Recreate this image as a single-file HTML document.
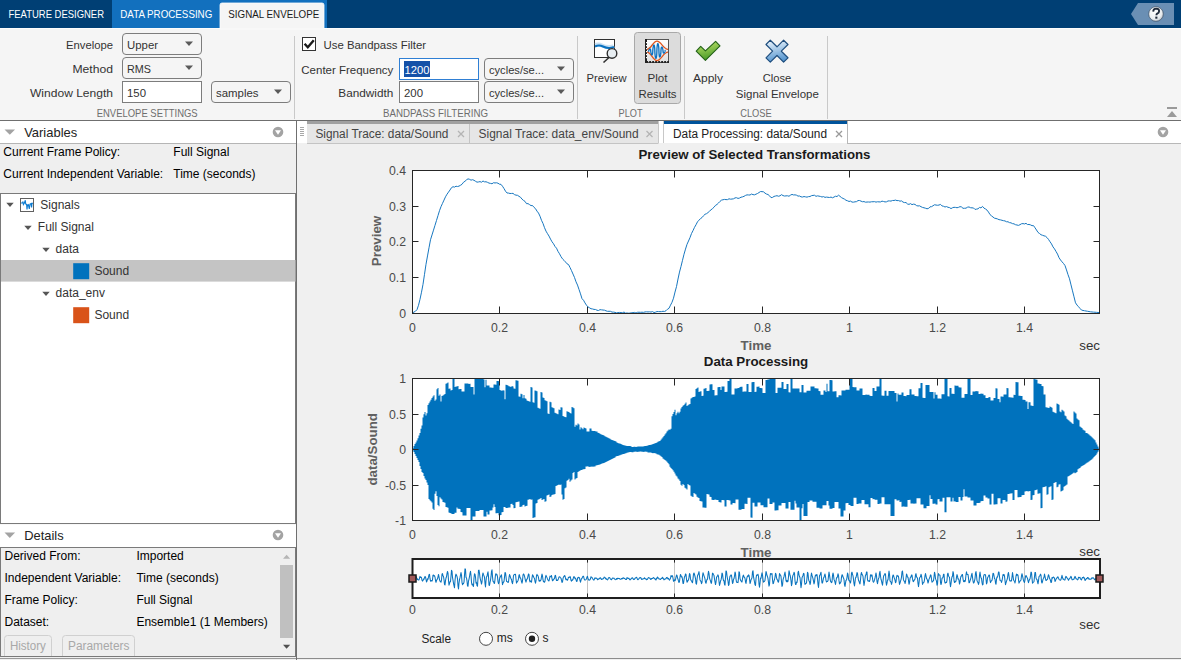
<!DOCTYPE html>
<html><head><meta charset="utf-8"><title>Signal Envelope</title>
<style>
html,body{margin:0;padding:0;width:1181px;height:660px;overflow:hidden;background:#f0f0f0;}
svg{display:block;font-family:"Liberation Sans", sans-serif;}
</style></head>
<body>
<svg width="1181" height="660" viewBox="0 0 1181 660">
<rect x="0" y="0" width="1181" height="28" fill="#003f74"/>
<rect x="112" y="0" width="215" height="28" fill="#1270be"/>
<rect x="0" y="28" width="1181" height="1" fill="#fcfcfc"/>
<rect x="0" y="29" width="1181" height="91" fill="#f5f5f5"/>
<path d="M220 29 V5 Q220 3 222 3 H322 Q324 3 324 5 V29 Z" fill="#f5f5f5" stroke="#fdfdfd" stroke-width="0.8"/>
<text x="8.5" y="18" font-size="11" fill="#ffffff" textLength="95.5" lengthAdjust="spacingAndGlyphs">FEATURE DESIGNER</text>
<text x="120.3" y="18" font-size="11" fill="#ffffff" textLength="92" lengthAdjust="spacingAndGlyphs">DATA PROCESSING</text>
<text x="228.3" y="18" font-size="11" fill="#1a1a1a" textLength="91" lengthAdjust="spacingAndGlyphs">SIGNAL ENVELOPE</text>
<path d="M1131 14 L1138 3 H1174 V25 H1138 Z" fill="#6a8fb4"/>
<defs><radialGradient id="hg" cx="0.4" cy="0.35" r="0.7"><stop offset="0" stop-color="#ffffff"/><stop offset="0.7" stop-color="#e8ecef"/><stop offset="1" stop-color="#b8c0c8"/></radialGradient></defs>
<circle cx="1156" cy="14" r="7.3" fill="url(#hg)" stroke="#2e3e50" stroke-width="0.6"/>
<path d="M1153.2 11.6 Q1153.3 8.6 1156.2 8.6 Q1159.2 8.7 1159.1 11.2 Q1159 12.8 1157.2 13.6 Q1156.4 14.1 1156.4 15.3" fill="none" stroke="#1f2a3a" stroke-width="1.9"/>
<rect x="1155.3" y="16.6" width="2.1" height="2.1" fill="#1f2a3a"/>
<text x="113" y="49" font-size="11.5" fill="#333333" text-anchor="end" textLength="47" lengthAdjust="spacingAndGlyphs">Envelope</text>
<text x="113" y="73" font-size="11.5" fill="#333333" text-anchor="end" textLength="40.5" lengthAdjust="spacingAndGlyphs">Method</text>
<text x="113" y="96.5" font-size="11.5" fill="#333333" text-anchor="end" textLength="83" lengthAdjust="spacingAndGlyphs">Window Length</text>
<rect x="122.5" y="33.5" width="79" height="21" fill="#f5f5f5" stroke="#7d7d7d" stroke-width="1" rx="3.5"/>
<text x="127" y="49" font-size="11.5" fill="#333333" textLength="31" lengthAdjust="spacingAndGlyphs">Upper</text>
<path d="M185 41.5 h8 l-4 4.5 z" fill="#5a5a5a"/>
<rect x="122.5" y="57.5" width="79" height="21" fill="#f5f5f5" stroke="#7d7d7d" stroke-width="1" rx="3.5"/>
<text x="127" y="73" font-size="11.5" fill="#333333" textLength="24" lengthAdjust="spacingAndGlyphs">RMS</text>
<path d="M185 65.5 h8 l-4 4.5 z" fill="#5a5a5a"/>
<rect x="122.5" y="81.5" width="79" height="21" fill="#ffffff" stroke="#7d7d7d" stroke-width="1"/>
<text x="127" y="97" font-size="11.5" fill="#333333" textLength="19" lengthAdjust="spacingAndGlyphs">150</text>
<rect x="211.5" y="81.5" width="79" height="21" fill="#f5f5f5" stroke="#7d7d7d" stroke-width="1" rx="3.5"/>
<text x="216" y="97" font-size="11.5" fill="#333333" textLength="42.5" lengthAdjust="spacingAndGlyphs">samples</text>
<path d="M274 89.5 h8 l-4 4.5 z" fill="#5a5a5a"/>
<text x="96.7" y="116.7" font-size="10.5" fill="#6e6e6e" textLength="101" lengthAdjust="spacingAndGlyphs">ENVELOPE SETTINGS</text>
<line x1="294.5" y1="36" x2="294.5" y2="119" stroke="#c9c9c9" stroke-width="1"/>
<rect x="302.5" y="37.5" width="13" height="13" fill="#ffffff" stroke="#333333" stroke-width="1"/>
<path d="M304.6 43.8 L307.8 47.3 L313.8 40.2" fill="none" stroke="#1a1a1a" stroke-width="2.4"/>
<text x="323.5" y="48.5" font-size="11.5" fill="#333333" textLength="102.5" lengthAdjust="spacingAndGlyphs">Use Bandpass Filter</text>
<text x="393.3" y="74.3" font-size="11.5" fill="#333333" text-anchor="end" textLength="92" lengthAdjust="spacingAndGlyphs">Center Frequency</text>
<text x="393.3" y="96.7" font-size="11.5" fill="#333333" text-anchor="end" textLength="55" lengthAdjust="spacingAndGlyphs">Bandwidth</text>
<rect x="399.5" y="58.5" width="79" height="21" fill="#ffffff" stroke="#2f7fd4" stroke-width="1"/>
<rect x="404" y="61" width="26" height="16" fill="#1551a8"/>
<text x="404.5" y="74" font-size="11.5" fill="#ffffff" textLength="25" lengthAdjust="spacingAndGlyphs">1200</text>
<rect x="399.5" y="81.5" width="79" height="21" fill="#ffffff" stroke="#7d7d7d" stroke-width="1"/>
<text x="404" y="97" font-size="11.5" fill="#333333" textLength="19" lengthAdjust="spacingAndGlyphs">200</text>
<rect x="484.5" y="58.5" width="89" height="21" fill="#f5f5f5" stroke="#7d7d7d" stroke-width="1" rx="3.5"/>
<text x="489" y="74" font-size="11.5" fill="#333333" textLength="55" lengthAdjust="spacingAndGlyphs">cycles/se...</text>
<path d="M557 66.5 h8 l-4 4.5 z" fill="#5a5a5a"/>
<rect x="484.5" y="81.5" width="89" height="21" fill="#f5f5f5" stroke="#7d7d7d" stroke-width="1" rx="3.5"/>
<text x="489" y="97" font-size="11.5" fill="#333333" textLength="55" lengthAdjust="spacingAndGlyphs">cycles/se...</text>
<path d="M557 89.5 h8 l-4 4.5 z" fill="#5a5a5a"/>
<text x="383" y="116.7" font-size="10.5" fill="#6e6e6e" textLength="105" lengthAdjust="spacingAndGlyphs">BANDPASS FILTERING</text>
<line x1="577.5" y1="36" x2="577.5" y2="119" stroke="#c9c9c9" stroke-width="1"/>
<rect x="594.5" y="39.5" width="20" height="18" fill="#ffffff" stroke="#303030" stroke-width="1"/>
<path d="M595 45 Q599 44 602 45.5 T609 47 T614 46" fill="none" stroke="#a8cdeb" stroke-width="4" opacity="0.6"/>
<path d="M595 46.5 Q599 44.5 603 46.5 T610 48 T614 47" fill="none" stroke="#0a72c0" stroke-width="2"/>
<line x1="609" y1="57.5" x2="603.5" y2="62.5" stroke="#303030" stroke-width="1.6"/>
<circle cx="612" cy="53.4" r="4.8" fill="#e8eef2" stroke="#303030" stroke-width="1.4"/>
<text x="606.6" y="82" font-size="11.5" fill="#333333" text-anchor="middle" textLength="40" lengthAdjust="spacingAndGlyphs">Preview</text>
<rect x="634.5" y="32.5" width="46" height="71" fill="#dcdcdc" stroke="#a9a9a9" stroke-width="1" rx="3"/>
<defs><linearGradient id="pg" x1="0" y1="0" x2="0" y2="1"><stop offset="0" stop-color="#ffffff"/><stop offset="1" stop-color="#e0e0e0"/></linearGradient></defs>
<rect x="645.5" y="39.5" width="23" height="23" fill="url(#pg)" stroke="#555" stroke-width="1"/>
<rect x="645" y="39" width="2" height="24" fill="#222"/><rect x="645" y="61" width="24" height="2" fill="#222"/>
<rect x="646" y="42" width="1" height="1.2" fill="#fff"/><rect x="646" y="45" width="1" height="1.2" fill="#fff"/><rect x="646" y="48" width="1" height="1.2" fill="#fff"/><rect x="646" y="51" width="1" height="1.2" fill="#fff"/><rect x="646" y="54" width="1" height="1.2" fill="#fff"/><rect x="646" y="57" width="1" height="1.2" fill="#fff"/><rect x="648" y="61.2" width="1.2" height="1" fill="#fff"/><rect x="651" y="61.2" width="1.2" height="1" fill="#fff"/><rect x="654" y="61.2" width="1.2" height="1" fill="#fff"/><rect x="657" y="61.2" width="1.2" height="1" fill="#fff"/><rect x="660" y="61.2" width="1.2" height="1" fill="#fff"/><rect x="663" y="61.2" width="1.2" height="1" fill="#fff"/><rect x="666" y="61.2" width="1.2" height="1" fill="#fff"/>
<path d="M647 49.3 C651 49.3 653 41.2 657 41.2 C661 41.2 663.5 49.3 668 49.3" fill="none" stroke="#e0541c" stroke-width="1.3"/>
<path d="M647 52.2 C651 52.2 653 60.6 657 60.6 C661 60.6 663.5 52.2 668 52.2" fill="none" stroke="#e0541c" stroke-width="1.3"/>
<polyline points="648.30,51.81 648.41,51.72 648.51,51.59 648.62,51.37 648.73,50.72 648.84,50.39 648.94,50.14 649.05,49.93 649.16,49.73 649.27,49.56 649.38,49.40 649.48,49.25 649.59,49.13 649.70,49.04 649.80,48.97 649.91,48.93 650.02,48.92 650.13,48.96 650.23,49.04 650.34,49.18 650.45,49.39 650.56,49.69 650.66,50.17 650.77,51.56 650.88,52.27 650.99,52.77 651.09,53.20 651.20,53.58 651.31,53.91 651.42,54.20 651.52,54.45 651.63,54.65 651.74,54.79 651.85,54.89 651.95,54.92 652.06,54.89 652.17,54.78 652.28,54.59 652.38,54.30 652.49,53.90 652.60,53.34 652.71,52.50 652.81,50.12 652.92,48.88 653.03,48.04 653.14,47.36 653.25,46.78 653.35,46.28 653.46,45.87 653.57,45.53 653.67,45.27 653.78,45.10 653.89,45.02 654.00,45.04 654.10,45.15 654.21,45.37 654.32,45.71 654.43,46.18 654.53,46.80 654.64,47.63 654.75,48.82 654.86,52.10 654.96,53.84 655.07,54.96 655.18,55.84 655.29,56.56 655.39,57.15 655.50,57.63 655.61,57.99 655.72,58.23 655.82,58.37 655.93,58.39 656.04,58.29 656.15,58.08 656.25,57.74 656.36,57.27 656.47,56.66 656.58,55.88 656.68,54.89 656.79,53.54 656.90,49.93 657.01,47.93 657.12,46.73 657.22,45.83 657.33,45.11 657.44,44.55 657.54,44.12 657.65,43.82 657.76,43.65 657.87,43.59 657.97,43.65 658.08,43.82 658.19,44.11 658.30,44.51 658.40,45.02 658.51,45.65 658.62,46.43 658.73,47.38 658.83,48.63 658.94,51.80 659.05,53.66 659.16,54.70 659.26,55.45 659.37,56.02 659.48,56.45 659.59,56.75 659.69,56.93 659.80,57.01 659.91,56.99 660.02,56.88 660.12,56.68 660.23,56.40 660.34,56.03 660.45,55.59 660.55,55.06 660.66,54.44 660.77,53.71 660.88,52.78 660.98,50.56 661.09,49.15 661.20,48.43 661.31,47.92 661.41,47.56 661.52,47.30 661.63,47.14 661.74,47.06 661.84,47.05 661.95,47.10 662.06,47.21 662.17,47.38 662.27,47.60 662.38,47.86 662.49,48.17 662.60,48.52 662.70,48.92 662.81,49.37 662.92,49.92 663.03,51.15 663.13,52.04 663.24,52.44 663.35,52.71 663.46,52.90 663.56,53.02 663.67,53.09 663.78,53.11 663.89,53.09 664.00,53.04 664.10,52.96 664.21,52.85 664.32,52.72 664.42,52.57 664.53,52.41 664.64,52.22 664.75,52.02 664.85,51.79 664.96,51.52 665.07,51.06 665.18,50.53 665.28,50.35 665.39,50.23 665.50,50.16" fill="none" stroke="#0a72c4" stroke-width="1.3"/>
<text x="657.5" y="82" font-size="11.5" fill="#333333" text-anchor="middle" textLength="20" lengthAdjust="spacingAndGlyphs">Plot</text>
<text x="657.5" y="97.8" font-size="11.5" fill="#333333" text-anchor="middle" textLength="38" lengthAdjust="spacingAndGlyphs">Results</text>
<text x="618.6" y="117" font-size="10.5" fill="#6e6e6e" textLength="24" lengthAdjust="spacingAndGlyphs">PLOT</text>
<line x1="684.5" y1="36" x2="684.5" y2="119" stroke="#c9c9c9" stroke-width="1"/>
<defs><linearGradient id="gg" x1="0" y1="0" x2="0.3" y2="1"><stop offset="0" stop-color="#c8ea70"/><stop offset="1" stop-color="#4a9a28"/></linearGradient><linearGradient id="bg" x1="0" y1="0" x2="0.2" y2="1"><stop offset="0" stop-color="#f2f9ff"/><stop offset="1" stop-color="#5897d0"/></linearGradient></defs>
<path d="M696.2 51.2 L700.7 46.3 L705.4 50.8 L715.6 41.3 L720 45.8 L705.4 60.4 Z" fill="url(#gg)" stroke="#24621a" stroke-width="1.1" stroke-linejoin="round"/>
<text x="708" y="82" font-size="11.5" fill="#333333" text-anchor="middle" textLength="30" lengthAdjust="spacingAndGlyphs">Apply</text>
<path d="M766 44.5 L770.3 40.2 L777 46.8 L783.6 40.2 L788 44.5 L781.3 51.2 L788 57.8 L783.6 62.2 L777 55.5 L770.3 62.2 L766 57.8 L772.6 51.2 Z" fill="url(#bg)" stroke="#1f4e7e" stroke-width="1.2" stroke-linejoin="round"/>
<text x="777" y="82" font-size="11.5" fill="#333333" text-anchor="middle" textLength="28.5" lengthAdjust="spacingAndGlyphs">Close</text>
<text x="777.3" y="97.8" font-size="11.5" fill="#333333" text-anchor="middle" textLength="83" lengthAdjust="spacingAndGlyphs">Signal Envelope</text>
<text x="740.2" y="117" font-size="10.5" fill="#6e6e6e" textLength="31.5" lengthAdjust="spacingAndGlyphs">CLOSE</text>
<line x1="827.5" y1="36" x2="827.5" y2="119" stroke="#c9c9c9" stroke-width="1"/>
<rect x="1167" y="107" width="10" height="2" fill="#9a9a9a"/>
<path d="M1167 117 L1177 117 L1172 111 Z" fill="#9a9a9a"/>
<rect x="0" y="120" width="1181" height="1" fill="#6f6f6f"/>
<rect x="0" y="121" width="296" height="22" fill="#ffffff"/>
<rect x="0" y="143" width="296" height="1" fill="#b5b5b5"/>
<path d="M4.5 129.4 h10.6 l-5.3 5.4 z" fill="#a3a3a3"/>
<text x="24.2" y="137" font-size="13" fill="#222" textLength="53" lengthAdjust="spacingAndGlyphs">Variables</text>
<circle cx="278" cy="132" r="5.3" fill="#a3a3a3"/>
<path d="M275 130.2 h6 l-3 4.6 z" fill="#ffffff"/>
<rect x="0" y="144" width="296" height="49" fill="#efefef"/>
<text x="3.3" y="156" font-size="12" fill="#000">Current Frame Policy:</text>
<text x="173.3" y="156" font-size="12" fill="#000">Full Signal</text>
<text x="3.3" y="178" font-size="12" fill="#000">Current Independent Variable:</text>
<text x="173.3" y="178" font-size="12" fill="#000">Time (seconds)</text>
<rect x="0.5" y="193.5" width="295" height="330" fill="#ffffff" stroke="#7a7a7a" stroke-width="1"/>
<rect x="1" y="260" width="294.5" height="21.6" fill="#c4c4c4"/>
<path d="M6.3 202.7 h7.4 l-3.7 4.3 z" fill="#555"/>
<rect x="20.5" y="198.5" width="13" height="13" fill="#ffffff" stroke="#606060" stroke-width="1"/>
<path d="M21 203 L22.6 203 L23 201.5 L23.4 204.5 L24.3 203.2 L25.3 200.2 L25.7 204 L26.6 204.3 L27 209.5 L27.5 205 L28.3 204.5 L29.3 208.8 L30 204 L31 203.5 L31.6 207.5 L32 203.3 L33 203.3" fill="none" stroke="#0a7ad0" stroke-width="1.1"/>
<text x="40.3" y="209" font-size="12" fill="#333">Signals</text>
<path d="M24.3 225.8 h7.4 l-3.7 4.3 z" fill="#555"/>
<text x="37.8" y="231" font-size="12" fill="#333">Full Signal</text>
<path d="M42.3 247.8 h7.4 l-3.7 4.3 z" fill="#555"/>
<text x="55.6" y="253" font-size="12" fill="#333">data</text>
<rect x="73.2" y="263.2" width="16" height="16" fill="#0072bd"/>
<text x="94.4" y="275.3" font-size="12" fill="#333">Sound</text>
<path d="M42.3 291.8 h7.4 l-3.7 4.3 z" fill="#555"/>
<text x="55.6" y="297" font-size="12" fill="#333">data_env</text>
<rect x="73.2" y="307.2" width="16" height="16" fill="#d95319"/>
<text x="94.4" y="319" font-size="12" fill="#333">Sound</text>
<rect x="0" y="524.5" width="296" height="23" fill="#ffffff"/>
<path d="M4.5 532.6 h10.6 l-5.3 5.4 z" fill="#a3a3a3"/>
<text x="24.2" y="539.7" font-size="13" fill="#222" textLength="39.4" lengthAdjust="spacingAndGlyphs">Details</text>
<circle cx="278" cy="535" r="5.3" fill="#a3a3a3"/>
<path d="M275 533.2 h6 l-3 4.6 z" fill="#ffffff"/>
<rect x="0.5" y="547.5" width="295" height="109" fill="#efefef" stroke="#7a7a7a" stroke-width="1"/>
<text x="4.5" y="560" font-size="12" fill="#000">Derived From:</text>
<text x="136.4" y="560" font-size="12" fill="#000">Imported</text>
<text x="4.5" y="582" font-size="12" fill="#000">Independent Variable:</text>
<text x="136.4" y="582" font-size="12" fill="#000">Time (seconds)</text>
<text x="4.5" y="604" font-size="12" fill="#000">Frame Policy:</text>
<text x="136.4" y="604" font-size="12" fill="#000">Full Signal</text>
<text x="4.5" y="626" font-size="12" fill="#000">Dataset:</text>
<text x="136.4" y="626" font-size="12" fill="#000">Ensemble1 (1 Members)</text>
<rect x="4.5" y="635.5" width="47" height="24" fill="none" stroke="#d0d0d0" stroke-width="1" rx="3"/>
<text x="9.9" y="649.7" font-size="12" fill="#a8a8a8" textLength="36" lengthAdjust="spacingAndGlyphs">History</text>
<rect x="62.5" y="635.5" width="72" height="24" fill="none" stroke="#d0d0d0" stroke-width="1" rx="3"/>
<text x="68" y="649.7" font-size="12" fill="#a8a8a8" textLength="61.4" lengthAdjust="spacingAndGlyphs">Parameters</text>
<rect x="280" y="565" width="13" height="73" fill="#c0c0c0"/>
<path d="M283 558.8 h7.2 l-3.6 -4 z" fill="#b5b5b5"/>
<path d="M283 644.8 h7.2 l-3.6 4 z" fill="#505050"/>
<rect x="0" y="656" width="296" height="1" fill="#7a7a7a"/>
<rect x="296" y="121" width="1" height="539" fill="#6f6f6f"/>
<rect x="297" y="121" width="884" height="22" fill="#ffffff"/>
<rect x="300" y="127" width="4" height="1" fill="#a8a8a8"/>
<rect x="300" y="129" width="4" height="1" fill="#a8a8a8"/>
<rect x="300" y="131" width="4" height="1" fill="#a8a8a8"/>
<rect x="300" y="133" width="4" height="1" fill="#a8a8a8"/>
<rect x="300" y="135" width="4" height="1" fill="#a8a8a8"/>
<rect x="307" y="121" width="156" height="22" fill="#e6e6e6"/>
<rect x="307" y="121" width="351.5" height="3" fill="#a0a0a0"/>
<rect x="307" y="124" width="351.5" height="19" fill="#e6e6e6"/>
<rect x="469" y="124" width="1" height="19" fill="#c4c4c4"/>
<rect x="658" y="121" width="1" height="22" fill="#c8c8c8"/>
<rect x="663" y="121" width="1" height="22" fill="#c8c8c8"/>
<rect x="664" y="121" width="183" height="3" fill="#00539b"/>
<text x="315.4" y="137.7" font-size="12" fill="#444" textLength="133" lengthAdjust="spacingAndGlyphs">Signal Trace: data/Sound</text>
<text x="478.6" y="137.7" font-size="12" fill="#444" textLength="160" lengthAdjust="spacingAndGlyphs">Signal Trace: data_env/Sound</text>
<text x="673" y="137.7" font-size="12" fill="#222" textLength="154" lengthAdjust="spacingAndGlyphs">Data Processing: data/Sound</text>
<path d="M458 131 L464 137 M464 131 L458 137" stroke="#b4b4b4" stroke-width="1.3"/>
<path d="M646.5 131 L652.5 137 M652.5 131 L646.5 137" stroke="#b4b4b4" stroke-width="1.3"/>
<path d="M836 131 L842 137 M842 131 L836 137" stroke="#9a9a9a" stroke-width="1.3"/>
<rect x="847" y="121" width="1" height="22" fill="#b8b8b8"/>
<rect x="307" y="143" width="351.5" height="1" fill="#c4c4c4"/>
<rect x="847" y="143" width="334" height="1" fill="#b8b8b8"/>
<circle cx="1163" cy="132" r="5.3" fill="#a3a3a3"/>
<path d="M1160 130.2 h6 l-3 4.6 z" fill="#ffffff"/>
<rect x="297" y="144" width="884" height="514" fill="#f0f0f0"/>
<rect x="297" y="658" width="884" height="1" fill="#8c8c8c"/>
<rect x="0" y="657" width="296" height="3" fill="#f0f0f0"/>
<rect x="0" y="658" width="296" height="1" fill="#9a9a9a"/>
<text x="754.5" y="159.4" font-size="13.33" fill="#1a1a1a" text-anchor="middle" font-weight="bold" textLength="232" lengthAdjust="spacingAndGlyphs">Preview of Selected Transformations</text>
<rect x="412.5" y="170.5" width="687.0" height="143.0" fill="#ffffff"/>
<path d="M412.50 313.5 v-7 M412.50 170.5 v7 M499.50 313.5 v-7 M499.50 170.5 v7 M587.50 313.5 v-7 M587.50 170.5 v7 M674.50 313.5 v-7 M674.50 170.5 v7 M762.50 313.5 v-7 M762.50 170.5 v7 M849.50 313.5 v-7 M849.50 170.5 v7 M937.50 313.5 v-7 M937.50 170.5 v7 M1024.50 313.5 v-7 M1024.50 170.5 v7 M412.5 313.50 h6 M1099.5 313.50 h-6 M412.5 277.50 h6 M1099.5 277.50 h-6 M412.5 241.50 h6 M1099.5 241.50 h-6 M412.5 206.50 h6 M1099.5 206.50 h-6 M412.5 170.50 h6 M1099.5 170.50 h-6 " stroke="#262626" stroke-width="1" fill="none"/>
<text x="412.5" y="331.9" font-size="13.33" fill="#4a4a4a" text-anchor="middle" textLength="6.81" lengthAdjust="spacingAndGlyphs">0</text>
<text x="499.5" y="331.9" font-size="13.33" fill="#4a4a4a" text-anchor="middle" textLength="17.03" lengthAdjust="spacingAndGlyphs">0.2</text>
<text x="587.5" y="331.9" font-size="13.33" fill="#4a4a4a" text-anchor="middle" textLength="17.03" lengthAdjust="spacingAndGlyphs">0.4</text>
<text x="674.5" y="331.9" font-size="13.33" fill="#4a4a4a" text-anchor="middle" textLength="17.03" lengthAdjust="spacingAndGlyphs">0.6</text>
<text x="762.5" y="331.9" font-size="13.33" fill="#4a4a4a" text-anchor="middle" textLength="17.03" lengthAdjust="spacingAndGlyphs">0.8</text>
<text x="849.5" y="331.9" font-size="13.33" fill="#4a4a4a" text-anchor="middle" textLength="6.81" lengthAdjust="spacingAndGlyphs">1</text>
<text x="937.5" y="331.9" font-size="13.33" fill="#4a4a4a" text-anchor="middle" textLength="17.03" lengthAdjust="spacingAndGlyphs">1.2</text>
<text x="1024.5" y="331.9" font-size="13.33" fill="#4a4a4a" text-anchor="middle" textLength="17.03" lengthAdjust="spacingAndGlyphs">1.4</text>
<text x="406" y="318.3" font-size="13.33" fill="#4a4a4a" text-anchor="end" textLength="6.81" lengthAdjust="spacingAndGlyphs">0</text>
<text x="406" y="282.3" font-size="13.33" fill="#4a4a4a" text-anchor="end" textLength="17.03" lengthAdjust="spacingAndGlyphs">0.1</text>
<text x="406" y="246.3" font-size="13.33" fill="#4a4a4a" text-anchor="end" textLength="17.03" lengthAdjust="spacingAndGlyphs">0.2</text>
<text x="406" y="211.3" font-size="13.33" fill="#4a4a4a" text-anchor="end" textLength="17.03" lengthAdjust="spacingAndGlyphs">0.3</text>
<text x="406" y="175.3" font-size="13.33" fill="#4a4a4a" text-anchor="end" textLength="17.03" lengthAdjust="spacingAndGlyphs">0.4</text>
<text x="756" y="350" font-size="13.33" fill="#606060" text-anchor="middle" font-weight="bold">Time</text>
<text x="1100" y="350" font-size="13.33" fill="#333" text-anchor="end">sec</text>
<text x="0" y="0" font-size="13.33" font-weight="bold" fill="#606060" text-anchor="middle" transform="translate(381.2 241) rotate(-90)">Preview</text>
<polyline points="412.5,312.90 414.0,312.04 415.5,311.19 417.0,309.62 418.5,305.25 420.0,299.26 421.5,292.19 423.0,284.33 424.5,274.30 426.0,264.27 427.5,255.95 429.0,247.75 430.5,239.78 432.0,234.95 433.5,230.13 435.0,225.31 436.5,220.44 438.0,215.56 439.5,210.68 441.0,206.65 442.5,203.37 444.0,200.09 445.5,196.81 447.0,194.23 448.5,192.11 450.0,189.99 451.5,187.65 453.0,186.72 454.5,187.11 456.0,186.19 457.5,186.53 459.0,186.11 460.5,185.27 462.0,184.31 463.5,182.24 465.0,181.25 466.5,179.83 468.0,178.87 469.5,179.29 471.0,180.16 472.5,179.70 474.0,180.27 475.5,181.27 477.0,182.16 478.5,181.94 480.0,181.62 481.5,182.21 483.0,180.98 484.5,181.85 486.0,181.76 487.5,182.35 489.0,183.09 490.5,183.40 492.0,183.75 493.5,182.73 495.0,182.96 496.5,182.77 498.0,183.21 499.5,184.19 501.0,184.37 502.5,186.28 504.0,188.54 505.5,191.19 507.0,192.97 508.5,193.07 510.0,193.50 511.5,193.44 513.0,193.36 514.5,194.62 516.0,195.17 517.5,195.29 519.0,196.35 520.5,197.22 522.0,199.12 523.5,200.43 525.0,201.38 526.5,203.68 528.0,203.61 529.5,204.59 531.0,205.62 532.5,205.52 534.0,207.39 535.5,208.63 537.0,211.17 538.5,213.06 540.0,216.20 541.5,220.34 543.0,223.44 544.5,227.67 546.0,231.15 547.5,233.68 549.0,236.08 550.5,239.09 552.0,241.77 553.5,243.75 555.0,246.46 556.5,248.18 558.0,251.39 559.5,253.77 561.0,256.62 562.5,258.86 564.0,260.34 565.5,261.96 567.0,263.80 568.5,264.53 570.0,267.48 571.5,270.61 573.0,274.04 574.5,277.46 576.0,281.79 577.5,285.07 579.0,289.45 580.5,293.86 582.0,298.68 583.5,300.23 585.0,302.91 586.5,305.26 588.0,306.93 589.5,307.77 591.0,308.74 592.5,308.95 594.0,309.41 595.5,309.48 597.0,310.26 598.5,310.49 600.0,309.66 601.5,309.83 603.0,310.04 604.5,310.18 606.0,310.84 607.5,311.32 609.0,311.28 610.5,311.32 612.0,312.11 613.5,312.10 615.0,312.38 616.5,312.89 618.0,312.62 619.5,312.45 621.0,312.62 622.5,312.73 624.0,312.03 625.5,313.09 627.0,312.99 628.5,313.15 630.0,313.10 631.5,312.66 633.0,312.71 634.5,312.40 636.0,313.03 637.5,312.28 639.0,312.22 640.5,312.32 642.0,312.21 643.5,312.35 645.0,311.95 646.5,311.82 648.0,311.94 649.5,311.81 651.0,312.06 652.5,311.59 654.0,312.55 655.5,312.17 657.0,311.55 658.5,311.61 660.0,311.66 661.5,311.62 663.0,311.26 664.5,311.45 666.0,310.72 667.5,309.19 669.0,308.30 670.5,305.18 672.0,302.28 673.5,298.19 675.0,292.05 676.5,286.59 678.0,279.03 679.5,272.09 681.0,266.44 682.5,260.32 684.0,254.24 685.5,249.10 687.0,244.33 688.5,241.00 690.0,237.61 691.5,233.54 693.0,230.61 694.5,227.36 696.0,224.76 697.5,221.80 699.0,220.18 700.5,218.58 702.0,217.57 703.5,215.72 705.0,214.28 706.5,213.68 708.0,212.58 709.5,211.16 711.0,209.84 712.5,208.59 714.0,207.23 715.5,205.36 717.0,204.46 718.5,203.02 720.0,201.38 721.5,200.13 723.0,199.75 724.5,199.41 726.0,199.62 727.5,199.63 729.0,198.79 730.5,199.18 732.0,199.04 733.5,198.80 735.0,197.90 736.5,197.71 738.0,198.43 739.5,198.06 741.0,197.22 742.5,196.86 744.0,196.34 745.5,195.41 747.0,194.86 748.5,194.96 750.0,195.02 751.5,194.05 753.0,194.63 754.5,194.82 756.0,194.17 757.5,193.50 759.0,192.54 760.5,191.55 762.0,191.65 763.5,191.83 765.0,193.13 766.5,194.07 768.0,194.53 769.5,195.75 771.0,197.61 772.5,197.42 774.0,196.41 775.5,196.02 777.0,195.70 778.5,196.26 780.0,195.80 781.5,194.67 783.0,195.58 784.5,196.02 786.0,195.88 787.5,195.77 789.0,196.26 790.5,195.15 792.0,194.40 793.5,194.95 795.0,194.87 796.5,195.18 798.0,196.12 799.5,195.97 801.0,196.82 802.5,197.02 804.0,196.54 805.5,196.85 807.0,197.15 808.5,196.61 810.0,196.54 811.5,195.66 813.0,195.41 814.5,195.24 816.0,196.34 817.5,195.85 819.0,196.14 820.5,196.46 822.0,197.02 823.5,196.60 825.0,197.39 826.5,197.08 828.0,197.31 829.5,197.49 831.0,197.08 832.5,197.78 834.0,197.06 835.5,196.23 837.0,196.56 838.5,195.19 840.0,196.33 841.5,197.62 843.0,198.41 844.5,199.13 846.0,200.28 847.5,200.76 849.0,201.48 850.5,201.10 852.0,202.09 853.5,202.15 855.0,201.82 856.5,201.65 858.0,200.57 859.5,200.49 861.0,201.14 862.5,201.73 864.0,201.57 865.5,202.18 867.0,202.04 868.5,201.98 870.0,202.12 871.5,201.75 873.0,201.78 874.5,201.64 876.0,202.12 877.5,201.75 879.0,201.89 880.5,201.93 882.0,201.11 883.5,201.47 885.0,201.93 886.5,201.81 888.0,200.96 889.5,200.91 891.0,201.10 892.5,200.47 894.0,200.48 895.5,200.08 897.0,200.61 898.5,200.55 900.0,201.20 901.5,200.87 903.0,202.10 904.5,202.59 906.0,202.53 907.5,203.97 909.0,204.36 910.5,203.61 912.0,204.64 913.5,204.13 915.0,204.38 916.5,205.59 918.0,205.99 919.5,205.79 921.0,206.71 922.5,207.41 924.0,207.79 925.5,208.22 927.0,208.78 928.5,208.47 930.0,206.83 931.5,206.68 933.0,205.75 934.5,204.77 936.0,205.04 937.5,205.28 939.0,205.04 940.5,204.40 942.0,205.93 943.5,206.25 945.0,207.03 946.5,206.55 948.0,207.30 949.5,207.59 951.0,208.60 952.5,207.73 954.0,207.31 955.5,207.40 957.0,207.74 958.5,207.37 960.0,206.63 961.5,206.95 963.0,208.32 964.5,208.25 966.0,208.17 967.5,207.20 969.0,206.93 970.5,207.69 972.0,207.87 973.5,207.93 975.0,209.46 976.5,209.12 978.0,208.82 979.5,207.45 981.0,207.87 982.5,206.42 984.0,208.17 985.5,208.96 987.0,210.10 988.5,212.09 990.0,214.58 991.5,215.83 993.0,217.06 994.5,218.18 996.0,218.47 997.5,218.96 999.0,219.67 1000.5,219.86 1002.0,220.30 1003.5,220.68 1005.0,220.93 1006.5,221.75 1008.0,221.78 1009.5,222.63 1011.0,222.84 1012.5,223.63 1014.0,223.83 1015.5,224.71 1017.0,225.02 1018.5,225.39 1020.0,224.68 1021.5,223.75 1023.0,223.60 1024.5,223.94 1026.0,223.32 1027.5,224.54 1029.0,224.44 1030.5,224.88 1032.0,225.66 1033.5,225.61 1035.0,227.78 1036.5,230.03 1038.0,232.42 1039.5,233.50 1041.0,234.75 1042.5,235.27 1044.0,235.84 1045.5,236.23 1047.0,237.55 1048.5,239.42 1050.0,241.73 1051.5,243.88 1053.0,246.90 1054.5,248.88 1056.0,251.47 1057.5,254.07 1059.0,257.67 1060.5,259.94 1062.0,261.82 1063.5,263.48 1065.0,265.55 1066.5,269.95 1068.0,274.65 1069.5,278.79 1071.0,284.88 1072.5,290.85 1074.0,296.83 1075.5,302.80 1077.0,305.05 1078.5,306.73 1080.0,308.41 1081.5,310.09 1083.0,310.45 1084.5,310.72 1086.0,311.00 1087.5,311.27 1089.0,311.54 1090.5,311.81 1092.0,311.98 1093.5,312.11 1095.0,312.23 1096.5,312.35 1098.0,312.48 1099.5,312.60" fill="none" stroke="#1777c0" stroke-width="1.0" stroke-linejoin="round"/>
<rect x="412.5" y="170.5" width="687.0" height="143.0" fill="none" stroke="#262626" stroke-width="1"/>
<text x="756" y="366" font-size="13.33" fill="#1a1a1a" text-anchor="middle" font-weight="bold">Data Processing</text>
<rect x="412.5" y="378.5" width="687.0" height="142.0" fill="#ffffff"/>
<path d="M412.5,448.2 413.5,448.2 413.5,445.9 414.5,445.9 414.5,444.0 415.5,444.0 415.5,442.5 416.5,442.5 416.5,440.5 417.5,440.5 417.5,438.2 418.5,438.2 418.5,435.4 419.5,435.4 419.5,433.1 420.5,433.1 420.5,428.7 421.5,428.7 421.5,425.5 422.5,425.5 422.5,417.6 423.5,417.6 423.5,414.2 424.5,414.2 424.5,412.0 425.5,412.0 425.5,415.4 426.5,415.4 426.5,413.2 427.5,413.2 427.5,405.1 428.5,405.1 428.5,403.2 429.5,403.2 429.5,401.5 430.5,401.5 430.5,399.8 431.5,399.8 431.5,398.1 432.5,398.1 432.5,396.4 433.5,396.4 433.5,395.2 434.5,395.2 434.5,400.7 435.5,400.7 435.5,399.5 436.5,399.5 436.5,389.2 437.5,389.2 437.5,388.1 438.5,388.1 438.5,395.7 439.5,395.7 439.5,394.5 440.5,394.5 440.5,401.6 441.5,401.6 441.5,396.0 442.5,396.0 442.5,395.4 443.5,395.4 443.5,394.7 444.5,394.7 444.5,394.1 445.5,394.1 445.5,383.8 446.5,383.8 446.5,383.2 447.5,383.2 447.5,382.5 448.5,382.5 448.5,388.8 449.5,388.8 449.5,388.6 450.5,388.6 450.5,390.4 451.5,390.4 451.5,390.1 452.5,390.1 452.5,379.0 453.5,379.0 453.5,379.0 454.5,379.0 454.5,386.9 455.5,386.9 455.5,386.6 456.5,386.6 456.5,386.4 457.5,386.4 457.5,386.1 458.5,386.1 458.5,389.2 459.5,389.2 459.5,389.0 460.5,389.0 460.5,388.9 461.5,388.9 461.5,391.5 462.5,391.5 462.5,391.5 463.5,391.5 463.5,391.4 464.5,391.4 464.5,383.6 465.5,383.6 465.5,383.6 466.5,383.6 466.5,383.5 467.5,383.5 467.5,383.4 468.5,383.4 468.5,383.9 469.5,383.9 469.5,383.8 470.5,383.8 470.5,387.1 471.5,387.1 471.5,387.0 472.5,387.0 472.5,387.0 473.5,387.0 473.5,394.6 474.5,394.6 474.5,379.0 475.5,379.0 475.5,379.0 476.5,379.0 476.5,379.0 477.5,379.0 477.5,379.0 478.5,379.0 478.5,379.0 479.5,379.0 479.5,379.0 480.5,379.0 480.5,379.0 481.5,379.0 481.5,379.0 482.5,379.0 482.5,379.0 483.5,379.0 483.5,379.6 484.5,379.6 484.5,387.2 485.5,387.2 485.5,379.7 486.5,379.7 486.5,385.4 487.5,385.4 487.5,385.5 488.5,385.5 488.5,385.6 489.5,385.6 489.5,387.6 490.5,387.6 490.5,387.6 491.5,387.6 491.5,387.7 492.5,387.7 492.5,387.8 493.5,387.8 493.5,384.5 494.5,384.5 494.5,384.6 495.5,384.6 495.5,384.7 496.5,384.7 496.5,381.0 497.5,381.0 497.5,381.1 498.5,381.1 498.5,381.2 499.5,381.2 499.5,390.0 500.5,390.0 500.5,390.4 501.5,390.4 501.5,390.8 502.5,390.8 502.5,390.2 503.5,390.2 503.5,390.6 504.5,390.6 504.5,399.2 505.5,399.2 505.5,384.7 506.5,384.7 506.5,385.1 507.5,385.1 507.5,385.5 508.5,385.5 508.5,386.2 509.5,386.2 509.5,386.6 510.5,386.6 510.5,386.9 511.5,386.9 511.5,386.1 512.5,386.1 512.5,386.4 513.5,386.4 513.5,388.5 514.5,388.5 514.5,388.8 515.5,388.8 515.5,380.2 516.5,380.2 516.5,380.5 517.5,380.5 517.5,380.8 518.5,380.8 518.5,396.4 519.5,396.4 519.5,396.8 520.5,396.8 520.5,393.8 521.5,393.8 521.5,394.2 522.5,394.2 522.5,398.3 523.5,398.3 523.5,395.0 524.5,395.0 524.5,398.3 525.5,398.3 525.5,398.7 526.5,398.7 526.5,400.5 527.5,400.5 527.5,400.9 528.5,400.9 528.5,401.3 529.5,401.3 529.5,401.8 530.5,401.8 530.5,387.0 531.5,387.0 531.5,387.4 532.5,387.4 532.5,402.3 533.5,402.3 533.5,402.7 534.5,402.7 534.5,390.4 535.5,390.4 535.5,390.8 536.5,390.8 536.5,391.3 537.5,391.3 537.5,407.8 538.5,407.8 538.5,408.3 539.5,408.3 539.5,408.8 540.5,408.8 540.5,391.9 541.5,391.9 541.5,392.4 542.5,392.4 542.5,397.6 543.5,397.6 543.5,398.1 544.5,398.1 544.5,400.2 545.5,400.2 545.5,400.7 546.5,400.7 546.5,401.2 547.5,401.2 547.5,413.4 548.5,413.4 548.5,413.9 549.5,413.9 549.5,401.8 550.5,401.8 550.5,402.3 551.5,402.3 551.5,407.3 552.5,407.3 552.5,407.8 553.5,407.8 553.5,408.3 554.5,408.3 554.5,412.8 555.5,412.8 555.5,413.3 556.5,413.3 556.5,413.8 557.5,413.8 557.5,414.3 558.5,414.3 558.5,409.4 559.5,409.4 559.5,409.9 560.5,409.9 560.5,407.3 561.5,407.3 561.5,407.6 562.5,407.6 562.5,416.1 563.5,416.1 563.5,416.5 564.5,416.5 564.5,416.9 565.5,416.9 565.5,417.3 566.5,417.3 566.5,411.3 567.5,411.3 567.5,411.7 568.5,411.7 568.5,412.1 569.5,412.1 569.5,412.9 570.5,412.9 570.5,413.6 571.5,413.6 571.5,406.9 572.5,406.9 572.5,407.6 573.5,407.6 573.5,408.3 574.5,408.3 574.5,426.7 575.5,426.7 575.5,424.8 576.5,424.8 576.5,425.6 577.5,425.6 577.5,423.5 578.5,423.5 578.5,424.6 579.5,424.6 579.5,429.5 580.5,429.5 580.5,427.2 581.5,427.2 581.5,428.3 582.5,428.3 582.5,429.2 583.5,429.2 583.5,427.6 584.5,427.6 584.5,428.1 585.5,428.1 585.5,428.5 586.5,428.5 586.5,431.4 587.5,431.4 587.5,431.5 588.5,431.5 588.5,431.6 589.5,431.6 589.5,428.5 590.5,428.5 590.5,428.5 591.5,428.5 591.5,430.8 592.5,430.8 592.5,430.9 593.5,430.9 593.5,431.1 594.5,431.1 594.5,431.1 595.5,431.1 595.5,431.4 596.5,431.4 596.5,431.6 597.5,431.6 597.5,432.7 598.5,432.7 598.5,433.0 599.5,433.0 599.5,433.7 600.5,433.7 600.5,434.2 601.5,434.2 601.5,434.7 602.5,434.7 602.5,434.9 603.5,434.9 603.5,435.4 604.5,435.4 604.5,436.2 605.5,436.2 605.5,436.7 606.5,436.7 606.5,437.2 607.5,437.2 607.5,437.7 608.5,437.7 608.5,438.2 609.5,438.2 609.5,438.7 610.5,438.7 610.5,439.4 611.5,439.4 611.5,439.9 612.5,439.9 612.5,440.3 613.5,440.3 613.5,440.8 614.5,440.8 614.5,440.9 615.5,440.9 615.5,441.4 616.5,441.4 616.5,442.4 617.5,442.4 617.5,442.9 618.5,442.9 618.5,443.4 619.5,443.4 619.5,443.6 620.5,443.6 620.5,444.0 621.5,444.0 621.5,444.6 622.5,444.6 622.5,444.9 623.5,444.9 623.5,445.2 624.5,445.2 624.5,445.5 625.5,445.5 625.5,445.7 626.5,445.7 626.5,446.0 627.5,446.0 627.5,445.9 628.5,445.9 628.5,446.0 629.5,446.0 629.5,446.1 630.5,446.1 630.5,446.2 631.5,446.2 631.5,446.9 632.5,446.9 632.5,447.0 633.5,447.0 633.5,446.7 634.5,446.7 634.5,446.8 635.5,446.8 635.5,446.9 636.5,446.9 636.5,446.8 637.5,446.8 637.5,446.6 638.5,446.6 638.5,446.5 639.5,446.5 639.5,446.4 640.5,446.4 640.5,446.6 641.5,446.6 641.5,446.5 642.5,446.5 642.5,446.5 643.5,446.5 643.5,446.2 644.5,446.2 644.5,446.1 645.5,446.1 645.5,446.1 646.5,446.1 646.5,445.8 647.5,445.8 647.5,445.4 648.5,445.4 648.5,445.1 649.5,445.1 649.5,445.0 650.5,445.0 650.5,444.7 651.5,444.7 651.5,444.4 652.5,444.4 652.5,444.1 653.5,444.1 653.5,443.8 654.5,443.8 654.5,443.3 655.5,443.3 655.5,443.0 656.5,443.0 656.5,442.5 657.5,442.5 657.5,441.7 658.5,441.7 658.5,441.2 659.5,441.2 659.5,441.1 660.5,441.1 660.5,439.7 661.5,439.7 661.5,438.4 662.5,438.4 662.5,437.2 663.5,437.2 663.5,435.9 664.5,435.9 664.5,434.4 665.5,434.4 665.5,433.3 666.5,433.3 666.5,431.6 667.5,431.6 667.5,430.5 668.5,430.5 668.5,429.5 669.5,429.5 669.5,429.8 670.5,429.8 670.5,428.7 671.5,428.7 671.5,416.2 672.5,416.2 672.5,414.1 673.5,414.1 673.5,411.9 674.5,411.9 674.5,409.8 675.5,409.8 675.5,415.2 676.5,415.2 676.5,413.2 677.5,413.2 677.5,411.7 678.5,411.7 678.5,413.3 679.5,413.3 679.5,411.8 680.5,411.8 680.5,408.4 681.5,408.4 681.5,407.0 682.5,407.0 682.5,405.7 683.5,405.7 683.5,405.1 684.5,405.1 684.5,403.8 685.5,403.8 685.5,402.6 686.5,402.6 686.5,405.9 687.5,405.9 687.5,405.2 688.5,405.2 688.5,404.5 689.5,404.5 689.5,403.9 690.5,403.9 690.5,398.5 691.5,398.5 691.5,397.8 692.5,397.8 692.5,397.1 693.5,397.1 693.5,397.1 694.5,397.1 694.5,396.4 695.5,396.4 695.5,388.9 696.5,388.9 696.5,388.2 697.5,388.2 697.5,387.6 698.5,387.6 698.5,391.9 699.5,391.9 699.5,391.6 700.5,391.6 700.5,391.3 701.5,391.3 701.5,396.1 702.5,396.1 702.5,395.8 703.5,395.8 703.5,388.7 704.5,388.7 704.5,388.4 705.5,388.4 705.5,388.1 706.5,388.1 706.5,391.0 707.5,391.0 707.5,390.9 708.5,390.9 708.5,390.8 709.5,390.8 709.5,384.4 710.5,384.4 710.5,384.3 711.5,384.3 711.5,384.2 712.5,384.2 712.5,390.1 713.5,390.1 713.5,390.0 714.5,390.0 714.5,395.4 715.5,395.4 715.5,395.3 716.5,395.3 716.5,395.2 717.5,395.2 717.5,387.2 718.5,387.2 718.5,387.1 719.5,387.1 719.5,387.1 720.5,387.1 720.5,390.0 721.5,390.0 721.5,386.6 722.5,386.6 722.5,386.5 723.5,386.5 723.5,386.4 724.5,386.4 724.5,391.9 725.5,391.9 725.5,391.9 726.5,391.9 726.5,391.8 727.5,391.8 727.5,381.0 728.5,381.0 728.5,381.0 729.5,381.0 729.5,379.0 730.5,379.0 730.5,379.0 731.5,379.0 731.5,394.5 732.5,394.5 732.5,394.5 733.5,394.5 733.5,394.4 734.5,394.4 734.5,388.6 735.5,388.6 735.5,388.5 736.5,388.5 736.5,388.4 737.5,388.4 737.5,387.9 738.5,387.9 738.5,387.9 739.5,387.9 739.5,386.9 740.5,386.9 740.5,386.8 741.5,386.8 741.5,386.7 742.5,386.7 742.5,391.7 743.5,391.7 743.5,391.6 744.5,391.6 744.5,391.6 745.5,391.6 745.5,391.5 746.5,391.5 746.5,384.0 747.5,384.0 747.5,384.0 748.5,384.0 748.5,392.1 749.5,392.1 749.5,392.0 750.5,392.0 750.5,392.0 751.5,392.0 751.5,382.2 752.5,382.2 752.5,382.1 753.5,382.1 753.5,382.1 754.5,382.1 754.5,391.9 755.5,391.9 755.5,391.8 756.5,391.8 756.5,386.7 757.5,386.7 757.5,386.7 758.5,386.7 758.5,386.6 759.5,386.6 759.5,388.1 760.5,388.1 760.5,388.1 761.5,388.1 761.5,388.2 762.5,388.2 762.5,392.9 763.5,392.9 763.5,392.9 764.5,392.9 764.5,393.0 765.5,393.0 765.5,380.1 766.5,380.1 766.5,380.1 767.5,380.1 767.5,379.6 768.5,379.6 768.5,379.6 769.5,379.6 769.5,379.0 770.5,379.0 770.5,379.0 771.5,379.0 771.5,379.0 772.5,379.0 772.5,379.0 773.5,379.0 773.5,379.0 774.5,379.0 774.5,379.0 775.5,379.0 775.5,393.1 776.5,393.1 776.5,393.1 777.5,393.1 777.5,387.7 778.5,387.7 778.5,387.8 779.5,387.8 779.5,387.8 780.5,387.8 780.5,387.8 781.5,387.8 781.5,382.0 782.5,382.0 782.5,382.1 783.5,382.1 783.5,388.9 784.5,388.9 784.5,388.9 785.5,388.9 785.5,388.9 786.5,388.9 786.5,384.1 787.5,384.1 787.5,384.1 788.5,384.1 788.5,392.3 789.5,392.3 789.5,392.4 790.5,392.4 790.5,379.0 791.5,379.0 791.5,379.0 792.5,379.0 792.5,388.5 793.5,388.5 793.5,388.5 794.5,388.5 794.5,388.6 795.5,388.6 795.5,388.5 796.5,388.5 796.5,388.5 797.5,388.5 797.5,388.5 798.5,388.5 798.5,388.6 799.5,388.6 799.5,392.3 800.5,392.3 800.5,392.3 801.5,392.3 801.5,384.9 802.5,384.9 802.5,385.0 803.5,385.0 803.5,392.5 804.5,392.5 804.5,392.5 805.5,392.5 805.5,392.6 806.5,392.6 806.5,390.7 807.5,390.7 807.5,390.7 808.5,390.7 808.5,390.7 809.5,390.7 809.5,390.7 810.5,390.7 810.5,386.6 811.5,386.6 811.5,386.6 812.5,386.6 812.5,386.6 813.5,386.6 813.5,386.6 814.5,386.6 814.5,388.3 815.5,388.3 815.5,388.3 816.5,388.3 816.5,388.4 817.5,388.4 817.5,388.4 818.5,388.4 818.5,391.1 819.5,391.1 819.5,391.2 820.5,391.2 820.5,394.7 821.5,394.7 821.5,394.8 822.5,394.8 822.5,394.8 823.5,394.8 823.5,390.5 824.5,390.5 824.5,390.5 825.5,390.5 825.5,391.9 826.5,391.9 826.5,383.8 827.5,383.8 827.5,391.2 828.5,391.2 828.5,391.2 829.5,391.2 829.5,380.1 830.5,380.1 830.5,380.1 831.5,380.1 831.5,380.2 832.5,380.2 832.5,391.4 833.5,391.4 833.5,391.4 834.5,391.4 834.5,391.3 835.5,391.3 835.5,391.3 836.5,391.3 836.5,397.2 837.5,397.2 837.5,397.2 838.5,397.2 838.5,395.3 839.5,395.3 839.5,395.3 840.5,395.3 840.5,395.4 841.5,395.4 841.5,390.4 842.5,390.4 842.5,390.4 843.5,390.4 843.5,390.4 844.5,390.4 844.5,390.5 845.5,390.5 845.5,389.7 846.5,389.7 846.5,389.7 847.5,389.7 847.5,389.8 848.5,389.8 848.5,389.8 849.5,389.8 849.5,379.0 850.5,379.0 850.5,379.0 851.5,379.0 851.5,379.0 852.5,379.0 852.5,387.1 853.5,387.1 853.5,387.2 854.5,387.2 854.5,387.2 855.5,387.2 855.5,387.2 856.5,387.2 856.5,390.4 857.5,390.4 857.5,390.4 858.5,390.4 858.5,390.5 859.5,390.5 859.5,388.4 860.5,388.4 860.5,388.4 861.5,388.4 861.5,388.5 862.5,388.5 862.5,394.9 863.5,394.9 863.5,395.0 864.5,395.0 864.5,395.0 865.5,395.0 865.5,394.6 866.5,394.6 866.5,394.7 867.5,394.7 867.5,394.7 868.5,394.7 868.5,394.7 869.5,394.7 869.5,395.8 870.5,395.8 870.5,395.9 871.5,395.9 871.5,395.9 872.5,395.9 872.5,388.1 873.5,388.1 873.5,388.1 874.5,388.1 874.5,391.0 875.5,391.0 875.5,391.0 876.5,391.0 876.5,386.6 877.5,386.6 877.5,386.6 878.5,386.6 878.5,386.6 879.5,386.6 879.5,379.0 880.5,379.0 880.5,379.0 881.5,379.0 881.5,395.6 882.5,395.6 882.5,395.7 883.5,395.7 883.5,395.7 884.5,395.7 884.5,390.8 885.5,390.8 885.5,390.8 886.5,390.8 886.5,395.8 887.5,395.8 887.5,395.8 888.5,395.8 888.5,391.0 889.5,391.0 889.5,391.1 890.5,391.1 890.5,390.9 891.5,390.9 891.5,391.0 892.5,391.0 892.5,391.0 893.5,391.0 893.5,391.0 894.5,391.0 894.5,393.1 895.5,393.1 895.5,393.1 896.5,393.1 896.5,401.5 897.5,401.5 897.5,393.5 898.5,393.5 898.5,394.7 899.5,394.7 899.5,394.7 900.5,394.7 900.5,394.8 901.5,394.8 901.5,392.5 902.5,392.5 902.5,392.5 903.5,392.5 903.5,396.1 904.5,396.1 904.5,396.1 905.5,396.1 905.5,396.2 906.5,396.2 906.5,394.9 907.5,394.9 907.5,395.0 908.5,395.0 908.5,395.0 909.5,395.0 909.5,389.3 910.5,389.3 910.5,389.3 911.5,389.3 911.5,394.5 912.5,394.5 912.5,394.5 913.5,394.5 913.5,394.5 914.5,394.5 914.5,396.1 915.5,396.1 915.5,396.1 916.5,396.1 916.5,396.2 917.5,396.2 917.5,396.2 918.5,396.2 918.5,388.2 919.5,388.2 919.5,388.2 920.5,388.2 920.5,382.9 921.5,382.9 921.5,383.0 922.5,383.0 922.5,397.8 923.5,397.8 923.5,397.9 924.5,397.9 924.5,397.9 925.5,397.9 925.5,384.9 926.5,384.9 926.5,384.9 927.5,384.9 927.5,384.9 928.5,384.9 928.5,385.0 929.5,385.0 929.5,392.0 930.5,392.0 930.5,392.1 931.5,392.1 931.5,392.1 932.5,392.1 932.5,392.1 933.5,392.1 933.5,398.6 934.5,398.6 934.5,392.2 935.5,392.2 935.5,394.7 936.5,394.7 936.5,394.7 937.5,394.7 937.5,398.6 938.5,398.6 938.5,398.6 939.5,398.6 939.5,398.6 940.5,398.6 940.5,398.7 941.5,398.7 941.5,394.2 942.5,394.2 942.5,394.3 943.5,394.3 943.5,394.3 944.5,394.3 944.5,379.0 945.5,379.0 945.5,379.0 946.5,379.0 946.5,379.0 947.5,379.0 947.5,396.3 948.5,396.3 948.5,396.4 949.5,396.4 949.5,387.9 950.5,387.9 950.5,387.9 951.5,387.9 951.5,393.8 952.5,393.8 952.5,393.8 953.5,393.8 953.5,393.9 954.5,393.9 954.5,385.6 955.5,385.6 955.5,385.7 956.5,385.7 956.5,385.7 957.5,385.7 957.5,385.8 958.5,385.8 958.5,387.3 959.5,387.3 959.5,387.4 960.5,387.4 960.5,387.4 961.5,387.4 961.5,397.8 962.5,397.8 962.5,397.8 963.5,397.8 963.5,397.8 964.5,397.8 964.5,393.9 965.5,393.9 965.5,393.9 966.5,393.9 966.5,394.0 967.5,394.0 967.5,379.0 968.5,379.0 968.5,379.0 969.5,379.0 969.5,379.0 970.5,379.0 970.5,395.1 971.5,395.1 971.5,395.1 972.5,395.1 972.5,391.4 973.5,391.4 973.5,391.5 974.5,391.5 974.5,391.5 975.5,391.5 975.5,391.1 976.5,391.1 976.5,391.2 977.5,391.2 977.5,391.2 978.5,391.2 978.5,394.0 979.5,394.0 979.5,394.0 980.5,394.0 980.5,393.6 981.5,393.6 981.5,393.7 982.5,393.7 982.5,393.7 983.5,393.7 983.5,395.3 984.5,395.3 984.5,395.3 985.5,395.3 985.5,398.0 986.5,398.0 986.5,398.1 987.5,398.1 987.5,398.1 988.5,398.1 988.5,397.1 989.5,397.1 989.5,397.2 990.5,397.2 990.5,400.5 991.5,400.5 991.5,400.5 992.5,400.5 992.5,400.6 993.5,400.6 993.5,398.0 994.5,398.0 994.5,398.1 995.5,398.1 995.5,388.3 996.5,388.3 996.5,388.4 997.5,388.4 997.5,399.0 998.5,399.0 998.5,399.0 999.5,399.0 999.5,402.3 1000.5,402.3 1000.5,396.5 1001.5,396.5 1001.5,396.6 1002.5,396.6 1002.5,396.7 1003.5,396.7 1003.5,394.4 1004.5,394.4 1004.5,394.5 1005.5,394.5 1005.5,394.6 1006.5,394.6 1006.5,388.1 1007.5,388.1 1007.5,388.2 1008.5,388.2 1008.5,397.2 1009.5,397.2 1009.5,397.3 1010.5,397.3 1010.5,397.5 1011.5,397.5 1011.5,397.6 1012.5,397.6 1012.5,397.7 1013.5,397.7 1013.5,394.8 1014.5,394.8 1014.5,394.9 1015.5,394.9 1015.5,382.1 1016.5,382.1 1016.5,382.2 1017.5,382.2 1017.5,382.3 1018.5,382.3 1018.5,395.7 1019.5,395.7 1019.5,395.8 1020.5,395.8 1020.5,395.9 1021.5,395.9 1021.5,396.0 1022.5,396.0 1022.5,399.7 1023.5,399.7 1023.5,399.8 1024.5,399.8 1024.5,399.9 1025.5,399.9 1025.5,401.4 1026.5,401.4 1026.5,401.5 1027.5,401.5 1027.5,408.9 1028.5,408.9 1028.5,402.2 1029.5,402.2 1029.5,402.3 1030.5,402.3 1030.5,405.6 1031.5,405.6 1031.5,405.8 1032.5,405.8 1032.5,406.0 1033.5,406.0 1033.5,379.1 1034.5,379.1 1034.5,379.3 1035.5,379.3 1035.5,379.5 1036.5,379.5 1036.5,379.7 1037.5,379.7 1037.5,383.4 1038.5,383.4 1038.5,383.6 1039.5,383.6 1039.5,383.9 1040.5,383.9 1040.5,384.1 1041.5,384.1 1041.5,386.0 1042.5,386.0 1042.5,386.2 1043.5,386.2 1043.5,394.4 1044.5,394.4 1044.5,394.6 1045.5,394.6 1045.5,407.3 1046.5,407.3 1046.5,407.5 1047.5,407.5 1047.5,407.8 1048.5,407.8 1048.5,408.0 1049.5,408.0 1049.5,406.6 1050.5,406.6 1050.5,407.1 1051.5,407.1 1051.5,407.7 1052.5,407.7 1052.5,411.7 1053.5,411.7 1053.5,412.2 1054.5,412.2 1054.5,412.8 1055.5,412.8 1055.5,413.3 1056.5,413.3 1056.5,403.6 1057.5,403.6 1057.5,404.1 1058.5,404.1 1058.5,404.7 1059.5,404.7 1059.5,411.4 1060.5,411.4 1060.5,412.2 1061.5,412.2 1061.5,409.8 1062.5,409.8 1062.5,410.6 1063.5,410.6 1063.5,411.4 1064.5,411.4 1064.5,415.5 1065.5,415.5 1065.5,416.3 1066.5,416.3 1066.5,418.8 1067.5,418.8 1067.5,419.7 1068.5,419.7 1068.5,420.6 1069.5,420.6 1069.5,421.5 1070.5,421.5 1070.5,422.3 1071.5,422.3 1071.5,423.2 1072.5,423.2 1072.5,424.1 1073.5,424.1 1073.5,411.6 1074.5,411.6 1074.5,412.5 1075.5,412.5 1075.5,413.4 1076.5,413.4 1076.5,418.4 1077.5,418.4 1077.5,419.4 1078.5,419.4 1078.5,420.3 1079.5,420.3 1079.5,426.5 1080.5,426.5 1080.5,427.3 1081.5,427.3 1081.5,428.1 1082.5,428.1 1082.5,429.5 1083.5,429.5 1083.5,430.3 1084.5,430.3 1084.5,430.8 1085.5,430.8 1085.5,433.0 1086.5,433.0 1086.5,433.0 1087.5,433.0 1087.5,433.8 1088.5,433.8 1088.5,434.6 1089.5,434.6 1089.5,435.4 1090.5,435.4 1090.5,436.3 1091.5,436.3 1091.5,437.3 1092.5,437.3 1092.5,438.3 1093.5,438.3 1093.5,439.3 1094.5,439.3 1094.5,440.3 1095.5,440.3 1095.5,442.6 1096.5,442.6 1096.5,444.6 1097.5,444.6 1097.5,446.6 1098.5,446.6 1098.5,448.6 1099.5,448.6 1099.5,449.6 1099.5,449.6 L1099.5,449.3 1099.5,449.3 1099.5,450.2 1098.5,450.2 1098.5,451.8 1097.5,451.8 1097.5,453.4 1096.5,453.4 1096.5,455.0 1095.5,455.0 1095.5,456.0 1094.5,456.0 1094.5,457.0 1093.5,457.0 1093.5,458.3 1092.5,458.3 1092.5,459.3 1091.5,459.3 1091.5,459.9 1090.5,459.9 1090.5,460.7 1089.5,460.7 1089.5,461.5 1088.5,461.5 1088.5,462.3 1087.5,462.3 1087.5,462.8 1086.5,462.8 1086.5,463.5 1085.5,463.5 1085.5,464.2 1084.5,464.2 1084.5,464.9 1083.5,464.9 1083.5,465.4 1082.5,465.4 1082.5,466.1 1081.5,466.1 1081.5,466.8 1080.5,466.8 1080.5,467.9 1079.5,467.9 1079.5,468.6 1078.5,468.6 1078.5,469.2 1077.5,469.2 1077.5,472.0 1076.5,472.0 1076.5,472.7 1075.5,472.7 1075.5,473.3 1074.5,473.3 1074.5,472.5 1073.5,472.5 1073.5,473.2 1072.5,473.2 1072.5,474.0 1071.5,474.0 1071.5,474.7 1070.5,474.7 1070.5,475.2 1069.5,475.2 1069.5,475.9 1068.5,475.9 1068.5,476.6 1067.5,476.6 1067.5,484.6 1066.5,484.6 1066.5,485.3 1065.5,485.3 1065.5,486.1 1064.5,486.1 1064.5,486.8 1063.5,486.8 1063.5,490.3 1062.5,490.3 1062.5,491.0 1061.5,491.0 1061.5,491.6 1060.5,491.6 1060.5,484.2 1059.5,484.2 1059.5,484.6 1058.5,484.6 1058.5,486.7 1057.5,486.7 1057.5,487.2 1056.5,487.2 1056.5,482.0 1055.5,482.0 1055.5,482.5 1054.5,482.5 1054.5,483.0 1053.5,483.0 1053.5,499.6 1052.5,499.6 1052.5,500.1 1051.5,500.1 1051.5,486.3 1050.5,486.3 1050.5,486.8 1049.5,486.8 1049.5,487.3 1048.5,487.3 1048.5,494.3 1047.5,494.3 1047.5,494.8 1046.5,494.8 1046.5,486.2 1045.5,486.2 1045.5,486.7 1044.5,486.7 1044.5,487.0 1043.5,487.0 1043.5,487.3 1042.5,487.3 1042.5,507.9 1041.5,507.9 1041.5,508.2 1040.5,508.2 1040.5,493.2 1039.5,493.2 1039.5,493.4 1038.5,493.4 1038.5,493.7 1037.5,493.7 1037.5,489.6 1036.5,489.6 1036.5,489.9 1035.5,489.9 1035.5,490.2 1034.5,490.2 1034.5,495.1 1033.5,495.1 1033.5,495.3 1032.5,495.3 1032.5,499.7 1031.5,499.7 1031.5,499.9 1030.5,499.9 1030.5,491.1 1029.5,491.1 1029.5,491.2 1028.5,491.2 1028.5,491.4 1027.5,491.4 1027.5,491.1 1026.5,491.1 1026.5,491.3 1025.5,491.3 1025.5,491.4 1024.5,491.4 1024.5,495.0 1023.5,495.0 1023.5,495.1 1022.5,495.1 1022.5,495.3 1021.5,495.3 1021.5,496.9 1020.5,496.9 1020.5,497.1 1019.5,497.1 1019.5,497.2 1018.5,497.2 1018.5,497.3 1017.5,497.3 1017.5,489.9 1016.5,489.9 1016.5,490.0 1015.5,490.0 1015.5,490.1 1014.5,490.1 1014.5,499.9 1013.5,499.9 1013.5,500.0 1012.5,500.0 1012.5,493.3 1011.5,493.3 1011.5,493.4 1010.5,493.4 1010.5,493.5 1009.5,493.5 1009.5,493.9 1008.5,493.9 1008.5,494.1 1007.5,494.1 1007.5,501.6 1006.5,501.6 1006.5,501.7 1005.5,501.7 1005.5,499.9 1004.5,499.9 1004.5,500.0 1003.5,500.0 1003.5,500.1 1002.5,500.1 1002.5,503.5 1001.5,503.5 1001.5,503.6 1000.5,503.6 1000.5,498.2 999.5,498.2 999.5,498.2 998.5,498.2 998.5,498.3 997.5,498.3 997.5,504.3 996.5,504.3 996.5,504.3 995.5,504.3 995.5,504.4 994.5,504.4 994.5,504.4 993.5,504.4 993.5,493.8 992.5,493.8 992.5,493.8 991.5,493.8 991.5,504.4 990.5,504.4 990.5,504.5 989.5,504.5 989.5,498.6 988.5,498.6 988.5,498.6 987.5,498.6 987.5,497.4 986.5,497.4 986.5,497.4 985.5,497.4 985.5,495.5 984.5,495.5 984.5,495.5 983.5,495.5 983.5,501.1 982.5,501.1 982.5,501.1 981.5,501.1 981.5,501.2 980.5,501.2 980.5,502.8 979.5,502.8 979.5,502.9 978.5,502.9 978.5,502.9 977.5,502.9 977.5,503.0 976.5,503.0 976.5,505.4 975.5,505.4 975.5,505.4 974.5,505.4 974.5,505.5 973.5,505.5 973.5,500.4 972.5,500.4 972.5,500.5 971.5,500.5 971.5,500.5 970.5,500.5 970.5,497.4 969.5,497.4 969.5,497.4 968.5,497.4 968.5,497.5 967.5,497.5 967.5,496.5 966.5,496.5 966.5,496.6 965.5,496.6 965.5,496.6 964.5,496.6 964.5,489.3 963.5,489.3 963.5,497.0 962.5,497.0 962.5,500.4 961.5,500.4 961.5,500.5 960.5,500.5 960.5,496.9 959.5,496.9 959.5,496.9 958.5,496.9 958.5,501.9 957.5,501.9 957.5,501.9 956.5,501.9 956.5,502.0 955.5,502.0 955.5,501.3 954.5,501.3 954.5,501.4 953.5,501.4 953.5,497.7 952.5,497.7 952.5,501.5 951.5,501.5 951.5,501.5 950.5,501.5 950.5,497.2 949.5,497.2 949.5,497.2 948.5,497.2 948.5,497.3 947.5,497.3 947.5,497.3 946.5,497.3 946.5,512.3 945.5,512.3 945.5,512.3 944.5,512.3 944.5,497.7 943.5,497.7 943.5,497.7 942.5,497.7 942.5,501.4 941.5,501.4 941.5,501.5 940.5,501.5 940.5,501.5 939.5,501.5 939.5,499.1 938.5,499.1 938.5,499.2 937.5,499.2 937.5,504.5 936.5,504.5 936.5,504.5 935.5,504.5 935.5,503.6 934.5,503.6 934.5,503.7 933.5,503.7 933.5,503.7 932.5,503.7 932.5,499.0 931.5,499.0 931.5,499.0 930.5,499.0 930.5,495.2 929.5,495.2 929.5,506.0 928.5,506.0 928.5,506.0 927.5,506.0 927.5,506.1 926.5,506.1 926.5,508.2 925.5,508.2 925.5,508.2 924.5,508.2 924.5,508.2 923.5,508.2 923.5,504.5 922.5,504.5 922.5,504.5 921.5,504.5 921.5,504.5 920.5,504.5 920.5,498.2 919.5,498.2 919.5,498.2 918.5,498.2 918.5,498.2 917.5,498.2 917.5,498.3 916.5,498.3 916.5,503.6 915.5,503.6 915.5,503.6 914.5,503.6 914.5,503.7 913.5,503.7 913.5,503.6 912.5,503.6 912.5,503.6 911.5,503.6 911.5,503.6 910.5,503.6 910.5,499.8 909.5,499.8 909.5,499.9 908.5,499.9 908.5,499.9 907.5,499.9 907.5,506.8 906.5,506.8 906.5,506.8 905.5,506.8 905.5,506.8 904.5,506.8 904.5,506.6 903.5,506.6 903.5,506.6 902.5,506.6 902.5,506.7 901.5,506.7 901.5,501.8 900.5,501.8 900.5,501.9 899.5,501.9 899.5,500.3 898.5,500.3 898.5,500.4 897.5,500.4 897.5,500.4 896.5,500.4 896.5,499.2 895.5,499.2 895.5,499.2 894.5,499.2 894.5,515.9 893.5,515.9 893.5,515.9 892.5,515.9 892.5,516.0 891.5,516.0 891.5,516.0 890.5,516.0 890.5,504.2 889.5,504.2 889.5,504.2 888.5,504.2 888.5,504.2 887.5,504.2 887.5,504.2 886.5,504.2 886.5,504.2 885.5,504.2 885.5,504.2 884.5,504.2 884.5,497.3 883.5,497.3 883.5,497.3 882.5,497.3 882.5,497.3 881.5,497.3 881.5,503.5 880.5,503.5 880.5,503.5 879.5,503.5 879.5,503.9 878.5,503.9 878.5,504.0 877.5,504.0 877.5,499.7 876.5,499.7 876.5,499.7 875.5,499.7 875.5,499.7 874.5,499.7 874.5,499.1 873.5,499.1 873.5,499.2 872.5,499.2 872.5,498.1 871.5,498.1 871.5,498.1 870.5,498.1 870.5,507.2 869.5,507.2 869.5,507.3 868.5,507.3 868.5,504.2 867.5,504.2 867.5,504.3 866.5,504.3 866.5,504.3 865.5,504.3 865.5,504.3 864.5,504.3 864.5,499.9 863.5,499.9 863.5,499.9 862.5,499.9 862.5,499.9 861.5,499.9 861.5,503.5 860.5,503.5 860.5,503.6 859.5,503.6 859.5,503.6 858.5,503.6 858.5,503.9 857.5,503.9 857.5,504.0 856.5,504.0 856.5,497.7 855.5,497.7 855.5,497.7 854.5,497.7 854.5,497.7 853.5,497.7 853.5,506.1 852.5,506.1 852.5,506.1 851.5,506.1 851.5,506.1 850.5,506.1 850.5,504.9 849.5,504.9 849.5,504.9 848.5,504.9 848.5,503.1 847.5,503.1 847.5,503.1 846.5,503.1 846.5,503.2 845.5,503.2 845.5,510.6 844.5,510.6 844.5,510.6 843.5,510.6 843.5,516.4 842.5,516.4 842.5,516.4 841.5,516.4 841.5,516.4 840.5,516.4 840.5,508.4 839.5,508.4 839.5,508.4 838.5,508.4 838.5,502.0 837.5,502.0 837.5,502.0 836.5,502.0 836.5,502.0 835.5,502.0 835.5,502.0 834.5,502.0 834.5,508.1 833.5,508.1 833.5,508.1 832.5,508.1 832.5,508.7 831.5,508.7 831.5,508.7 830.5,508.7 830.5,508.7 829.5,508.7 829.5,505.5 828.5,505.5 828.5,500.9 827.5,500.9 827.5,500.9 826.5,500.9 826.5,505.2 825.5,505.2 825.5,505.2 824.5,505.2 824.5,505.2 823.5,505.2 823.5,505.2 822.5,505.2 822.5,508.4 821.5,508.4 821.5,508.4 820.5,508.4 820.5,508.4 819.5,508.4 819.5,507.8 818.5,507.8 818.5,507.8 817.5,507.8 817.5,507.8 816.5,507.8 816.5,501.8 815.5,501.8 815.5,501.8 814.5,501.8 814.5,501.8 813.5,501.8 813.5,501.8 812.5,501.8 812.5,500.4 811.5,500.4 811.5,500.4 810.5,500.4 810.5,500.4 809.5,500.4 809.5,502.1 808.5,502.1 808.5,502.1 807.5,502.1 807.5,516.1 806.5,516.1 806.5,516.1 805.5,516.1 805.5,516.1 804.5,516.1 804.5,516.1 803.5,516.1 803.5,504.1 802.5,504.1 802.5,508.3 801.5,508.3 801.5,519.9 800.5,519.9 800.5,519.9 799.5,519.9 799.5,507.5 798.5,507.5 798.5,507.5 797.5,507.5 797.5,507.5 796.5,507.5 796.5,503.6 795.5,503.6 795.5,500.8 794.5,500.8 794.5,509.7 793.5,509.7 793.5,509.7 792.5,509.7 792.5,509.8 791.5,509.8 791.5,509.8 790.5,509.8 790.5,502.1 789.5,502.1 789.5,502.1 788.5,502.1 788.5,508.4 787.5,508.4 787.5,508.4 786.5,508.4 786.5,508.4 785.5,508.4 785.5,503.0 784.5,503.0 784.5,503.0 783.5,503.0 783.5,503.0 782.5,503.0 782.5,503.0 781.5,503.0 781.5,505.5 780.5,505.5 780.5,505.5 779.5,505.5 779.5,505.5 778.5,505.5 778.5,510.3 777.5,510.3 777.5,510.3 776.5,510.3 776.5,510.4 775.5,510.4 775.5,510.4 774.5,510.4 774.5,502.5 773.5,502.5 773.5,502.5 772.5,502.5 772.5,504.0 771.5,504.0 771.5,504.0 770.5,504.0 770.5,504.0 769.5,504.0 769.5,498.5 768.5,498.5 768.5,498.5 767.5,498.5 767.5,507.2 766.5,507.2 766.5,507.2 765.5,507.2 765.5,507.2 764.5,507.2 764.5,507.2 763.5,507.2 763.5,505.3 762.5,505.3 762.5,505.3 761.5,505.3 761.5,505.3 760.5,505.3 760.5,502.6 759.5,502.6 759.5,502.5 758.5,502.5 758.5,502.5 757.5,502.5 757.5,506.5 756.5,506.5 756.5,506.5 755.5,506.5 755.5,506.4 754.5,506.4 754.5,502.7 753.5,502.7 753.5,502.7 752.5,502.7 752.5,517.7 751.5,517.7 751.5,517.6 750.5,517.6 750.5,497.8 749.5,497.8 749.5,497.8 748.5,497.8 748.5,497.7 747.5,497.7 747.5,503.9 746.5,503.9 746.5,503.8 745.5,503.8 745.5,503.8 744.5,503.8 744.5,509.1 743.5,509.1 743.5,509.0 742.5,509.0 742.5,509.0 741.5,509.0 741.5,509.8 740.5,509.8 740.5,509.8 739.5,509.8 739.5,509.7 738.5,509.7 738.5,499.5 737.5,499.5 737.5,499.4 736.5,499.4 736.5,499.4 735.5,499.4 735.5,503.2 734.5,503.2 734.5,503.1 733.5,503.1 733.5,503.1 732.5,503.1 732.5,504.4 731.5,504.4 731.5,504.4 730.5,504.4 730.5,500.4 729.5,500.4 729.5,500.2 728.5,500.2 728.5,500.1 727.5,500.1 727.5,499.9 726.5,499.9 726.5,506.6 725.5,506.6 725.5,506.5 724.5,506.5 724.5,500.2 723.5,500.2 723.5,500.0 722.5,500.0 722.5,499.9 721.5,499.9 721.5,502.4 720.5,502.4 720.5,502.3 719.5,502.3 719.5,502.1 718.5,502.1 718.5,500.1 717.5,500.1 717.5,499.9 716.5,499.9 716.5,499.8 715.5,499.8 715.5,499.6 714.5,499.6 714.5,500.1 713.5,500.1 713.5,500.0 712.5,500.0 712.5,499.8 711.5,499.8 711.5,497.0 710.5,497.0 710.5,496.8 709.5,496.8 709.5,494.4 708.5,494.4 708.5,494.3 707.5,494.3 707.5,494.1 706.5,494.1 706.5,507.8 705.5,507.8 705.5,507.7 704.5,507.7 704.5,507.5 703.5,507.5 703.5,507.4 702.5,507.4 702.5,501.4 701.5,501.4 701.5,501.2 700.5,501.2 700.5,501.1 699.5,501.1 699.5,498.1 698.5,498.1 698.5,497.4 697.5,497.4 697.5,496.7 696.5,496.7 696.5,494.4 695.5,494.4 695.5,493.7 694.5,493.7 694.5,493.1 693.5,493.1 693.5,497.1 692.5,497.1 692.5,496.5 691.5,496.5 691.5,495.8 690.5,495.8 690.5,485.6 689.5,485.6 689.5,485.0 688.5,485.0 688.5,484.0 687.5,484.0 687.5,489.6 686.5,489.6 686.5,488.6 685.5,488.6 685.5,487.7 684.5,487.7 684.5,485.0 683.5,485.0 683.5,484.0 682.5,484.0 682.5,485.7 681.5,485.7 681.5,484.7 680.5,484.7 680.5,481.1 679.5,481.1 679.5,479.5 678.5,479.5 678.5,478.4 677.5,478.4 677.5,476.6 676.5,476.6 676.5,475.4 675.5,475.4 675.5,473.5 674.5,473.5 674.5,471.7 673.5,471.7 673.5,470.2 672.5,470.2 672.5,469.0 671.5,469.0 671.5,467.9 670.5,467.9 670.5,466.7 669.5,466.7 669.5,464.2 668.5,464.2 668.5,463.0 667.5,463.0 667.5,461.8 666.5,461.8 666.5,460.8 665.5,460.8 665.5,460.0 664.5,460.0 664.5,459.2 663.5,459.2 663.5,458.4 662.5,458.4 662.5,457.1 661.5,457.1 661.5,456.3 660.5,456.3 660.5,455.5 659.5,455.5 659.5,454.7 658.5,454.7 658.5,454.6 657.5,454.6 657.5,454.3 656.5,454.3 656.5,453.5 655.5,453.5 655.5,453.2 654.5,453.2 654.5,452.9 653.5,452.9 653.5,453.2 652.5,453.2 652.5,452.9 651.5,452.9 651.5,452.6 650.5,452.6 650.5,452.5 649.5,452.5 649.5,452.5 648.5,452.5 648.5,452.4 647.5,452.4 647.5,451.7 646.5,451.7 646.5,451.7 645.5,451.7 645.5,451.6 644.5,451.6 644.5,451.9 643.5,451.9 643.5,451.8 642.5,451.8 642.5,451.7 641.5,451.7 641.5,451.6 640.5,451.6 640.5,451.5 639.5,451.5 639.5,451.8 638.5,451.8 638.5,451.8 637.5,451.8 637.5,451.9 636.5,451.9 636.5,451.6 635.5,451.6 635.5,451.7 634.5,451.7 634.5,451.7 633.5,451.7 633.5,452.2 632.5,452.2 632.5,452.3 631.5,452.3 631.5,452.0 630.5,452.0 630.5,452.1 629.5,452.1 629.5,452.2 628.5,452.2 628.5,452.4 627.5,452.4 627.5,452.8 626.5,452.8 626.5,453.2 625.5,453.2 625.5,453.5 624.5,453.5 624.5,453.9 623.5,453.9 623.5,454.1 622.5,454.1 622.5,454.5 621.5,454.5 621.5,454.8 620.5,454.8 620.5,455.2 619.5,455.2 619.5,455.5 618.5,455.5 618.5,455.9 617.5,455.9 617.5,456.1 616.5,456.1 616.5,456.6 615.5,456.6 615.5,457.6 614.5,457.6 614.5,458.1 613.5,458.1 613.5,458.6 612.5,458.6 612.5,459.1 611.5,459.1 611.5,459.6 610.5,459.6 610.5,460.1 609.5,460.1 609.5,460.6 608.5,460.6 608.5,461.0 607.5,461.0 607.5,461.5 606.5,461.5 606.5,462.0 605.5,462.0 605.5,462.5 604.5,462.5 604.5,462.9 603.5,462.9 603.5,463.3 602.5,463.3 602.5,463.6 601.5,463.6 601.5,464.0 600.5,464.0 600.5,464.5 599.5,464.5 599.5,464.7 598.5,464.7 598.5,465.1 597.5,465.1 597.5,465.2 596.5,465.2 596.5,465.4 595.5,465.4 595.5,466.5 594.5,466.5 594.5,466.6 593.5,466.6 593.5,466.8 592.5,466.8 592.5,466.5 591.5,466.5 591.5,466.7 590.5,466.7 590.5,466.8 589.5,466.8 589.5,466.9 588.5,466.9 588.5,466.3 587.5,466.3 587.5,466.4 586.5,466.4 586.5,466.5 585.5,466.5 585.5,469.1 584.5,469.1 584.5,469.2 583.5,469.2 583.5,469.3 582.5,469.3 582.5,469.9 581.5,469.9 581.5,470.0 580.5,470.0 580.5,470.7 579.5,470.7 579.5,471.2 578.5,471.2 578.5,471.9 577.5,471.9 577.5,477.9 576.5,477.9 576.5,478.6 575.5,478.6 575.5,479.4 574.5,479.4 574.5,471.9 573.5,471.9 573.5,473.0 572.5,473.0 572.5,479.5 571.5,479.5 571.5,480.6 570.5,480.6 570.5,481.7 569.5,481.7 569.5,478.8 568.5,478.8 568.5,479.9 567.5,479.9 567.5,480.8 566.5,480.8 566.5,487.4 565.5,487.4 565.5,488.2 564.5,488.2 564.5,499.0 563.5,499.0 563.5,499.7 562.5,499.7 562.5,494.5 561.5,494.5 561.5,484.4 560.5,484.4 560.5,485.1 559.5,485.1 559.5,484.4 558.5,484.4 558.5,484.9 557.5,484.9 557.5,485.4 556.5,485.4 556.5,485.9 555.5,485.9 555.5,493.9 554.5,493.9 554.5,494.4 553.5,494.4 553.5,494.4 552.5,494.4 552.5,494.9 551.5,494.9 551.5,496.6 550.5,496.6 550.5,497.1 549.5,497.1 549.5,494.5 548.5,494.5 548.5,495.1 547.5,495.1 547.5,495.6 546.5,495.6 546.5,501.3 545.5,501.3 545.5,501.8 544.5,501.8 544.5,499.0 543.5,499.0 543.5,499.5 542.5,499.5 542.5,500.0 541.5,500.0 541.5,498.1 540.5,498.1 540.5,498.7 539.5,498.7 539.5,499.2 538.5,499.2 538.5,499.7 537.5,499.7 537.5,503.1 536.5,503.1 536.5,503.6 535.5,503.6 535.5,517.2 534.5,517.2 534.5,517.5 533.5,517.5 533.5,517.9 532.5,517.9 532.5,499.4 531.5,499.4 531.5,499.8 530.5,499.8 530.5,499.0 529.5,499.0 529.5,499.4 528.5,499.4 528.5,499.7 527.5,499.7 527.5,505.7 526.5,505.7 526.5,506.0 525.5,506.0 525.5,506.4 524.5,506.4 524.5,504.7 523.5,504.7 523.5,505.0 522.5,505.0 522.5,506.4 521.5,506.4 521.5,506.8 520.5,506.8 520.5,507.1 519.5,507.1 519.5,501.6 518.5,501.6 518.5,501.8 517.5,501.8 517.5,502.0 516.5,502.0 516.5,502.2 515.5,502.2 515.5,508.0 514.5,508.0 514.5,508.2 513.5,508.2 513.5,505.0 512.5,505.0 512.5,503.8 511.5,503.8 511.5,504.0 510.5,504.0 510.5,507.4 509.5,507.4 509.5,507.6 508.5,507.6 508.5,507.7 507.5,507.7 507.5,507.9 506.5,507.9 506.5,508.1 505.5,508.1 505.5,506.9 504.5,506.9 504.5,507.0 503.5,507.0 503.5,512.1 502.5,512.1 502.5,512.3 501.5,512.3 501.5,515.0 500.5,515.0 500.5,515.2 499.5,515.2 499.5,515.3 498.5,515.3 498.5,513.1 497.5,513.1 497.5,513.2 496.5,513.2 496.5,513.3 495.5,513.3 495.5,507.1 494.5,507.1 494.5,504.3 493.5,504.3 493.5,507.4 492.5,507.4 492.5,510.2 491.5,510.2 491.5,510.4 490.5,510.4 490.5,510.5 489.5,510.5 489.5,514.5 488.5,514.5 488.5,514.5 487.5,514.5 487.5,511.7 486.5,511.7 486.5,516.5 485.5,516.5 485.5,516.5 484.5,516.5 484.5,516.5 483.5,516.5 483.5,510.0 482.5,510.0 482.5,510.0 481.5,510.0 481.5,510.0 480.5,510.0 480.5,510.0 479.5,510.0 479.5,511.0 478.5,511.0 478.5,511.0 477.5,511.0 477.5,511.0 476.5,511.0 476.5,511.0 475.5,511.0 475.5,516.6 474.5,516.6 474.5,516.6 473.5,516.6 473.5,516.6 472.5,516.6 472.5,520.0 471.5,520.0 471.5,520.0 470.5,520.0 470.5,508.1 469.5,508.1 469.5,508.1 468.5,508.1 468.5,508.0 467.5,508.0 467.5,508.0 466.5,508.0 466.5,515.6 465.5,515.6 465.5,515.5 464.5,515.5 464.5,515.5 463.5,515.5 463.5,515.4 462.5,515.4 462.5,512.2 461.5,512.2 461.5,512.1 460.5,512.1 460.5,508.9 459.5,508.9 459.5,508.8 458.5,508.8 458.5,508.8 457.5,508.8 457.5,507.5 456.5,507.5 456.5,512.8 455.5,512.8 455.5,512.7 454.5,512.7 454.5,514.0 453.5,514.0 453.5,513.9 452.5,513.9 452.5,513.9 451.5,513.9 451.5,513.3 450.5,513.3 450.5,512.9 449.5,512.9 449.5,512.5 448.5,512.5 448.5,507.7 447.5,507.7 447.5,507.3 446.5,507.3 446.5,506.9 445.5,506.9 445.5,502.7 444.5,502.7 444.5,502.3 443.5,502.3 443.5,501.9 442.5,501.9 442.5,499.6 441.5,499.6 441.5,498.4 440.5,498.4 440.5,497.3 439.5,497.3 439.5,506.3 438.5,506.3 438.5,505.1 437.5,505.1 437.5,496.1 436.5,496.1 436.5,491.2 435.5,491.2 435.5,493.8 434.5,493.8 434.5,509.9 433.5,509.9 433.5,508.7 432.5,508.7 432.5,502.5 431.5,502.5 431.5,501.3 430.5,501.3 430.5,500.2 429.5,500.2 429.5,499.0 428.5,499.0 428.5,485.0 427.5,485.0 427.5,482.5 426.5,482.5 426.5,479.9 425.5,479.9 425.5,478.6 424.5,478.6 424.5,476.1 423.5,476.1 423.5,473.1 422.5,473.1 422.5,472.1 421.5,472.1 421.5,469.0 420.5,469.0 420.5,465.9 419.5,465.9 419.5,461.9 418.5,461.9 418.5,459.9 417.5,459.9 417.5,457.9 416.5,457.9 416.5,456.0 415.5,456.0 415.5,454.0 414.5,454.0 414.5,452.0 413.5,452.0 413.5,450.3 412.5,450.3 Z" fill="#0072bd"/>
<path d="M412.50 520.5 v-7 M412.50 378.5 v7 M499.50 520.5 v-7 M499.50 378.5 v7 M587.50 520.5 v-7 M587.50 378.5 v7 M674.50 520.5 v-7 M674.50 378.5 v7 M762.50 520.5 v-7 M762.50 378.5 v7 M849.50 520.5 v-7 M849.50 378.5 v7 M937.50 520.5 v-7 M937.50 378.5 v7 M1024.50 520.5 v-7 M1024.50 378.5 v7 M412.5 378.50 h6 M1099.5 378.50 h-6 M412.5 414.50 h6 M1099.5 414.50 h-6 M412.5 449.50 h6 M1099.5 449.50 h-6 M412.5 485.50 h6 M1099.5 485.50 h-6 M412.5 520.50 h6 M1099.5 520.50 h-6 " stroke="#262626" stroke-width="1" fill="none"/>
<rect x="412.5" y="378.5" width="687.0" height="142.0" fill="none" stroke="#262626" stroke-width="1"/>
<text x="412.5" y="539.3" font-size="13.33" fill="#4a4a4a" text-anchor="middle" textLength="6.81" lengthAdjust="spacingAndGlyphs">0</text>
<text x="499.5" y="539.3" font-size="13.33" fill="#4a4a4a" text-anchor="middle" textLength="17.03" lengthAdjust="spacingAndGlyphs">0.2</text>
<text x="587.5" y="539.3" font-size="13.33" fill="#4a4a4a" text-anchor="middle" textLength="17.03" lengthAdjust="spacingAndGlyphs">0.4</text>
<text x="674.5" y="539.3" font-size="13.33" fill="#4a4a4a" text-anchor="middle" textLength="17.03" lengthAdjust="spacingAndGlyphs">0.6</text>
<text x="762.5" y="539.3" font-size="13.33" fill="#4a4a4a" text-anchor="middle" textLength="17.03" lengthAdjust="spacingAndGlyphs">0.8</text>
<text x="849.5" y="539.3" font-size="13.33" fill="#4a4a4a" text-anchor="middle" textLength="6.81" lengthAdjust="spacingAndGlyphs">1</text>
<text x="937.5" y="539.3" font-size="13.33" fill="#4a4a4a" text-anchor="middle" textLength="17.03" lengthAdjust="spacingAndGlyphs">1.2</text>
<text x="1024.5" y="539.3" font-size="13.33" fill="#4a4a4a" text-anchor="middle" textLength="17.03" lengthAdjust="spacingAndGlyphs">1.4</text>
<text x="406" y="383.3" font-size="13.33" fill="#4a4a4a" text-anchor="end" textLength="6.81" lengthAdjust="spacingAndGlyphs">1</text>
<text x="406" y="419.3" font-size="13.33" fill="#4a4a4a" text-anchor="end" textLength="17.03" lengthAdjust="spacingAndGlyphs">0.5</text>
<text x="406" y="454.3" font-size="13.33" fill="#4a4a4a" text-anchor="end" textLength="6.81" lengthAdjust="spacingAndGlyphs">0</text>
<text x="406" y="490.3" font-size="13.33" fill="#4a4a4a" text-anchor="end" textLength="21.12" lengthAdjust="spacingAndGlyphs">-0.5</text>
<text x="406" y="525.3" font-size="13.33" fill="#4a4a4a" text-anchor="end" textLength="10.9" lengthAdjust="spacingAndGlyphs">-1</text>
<text x="756" y="557" font-size="13.33" fill="#606060" text-anchor="middle" font-weight="bold">Time</text>
<text x="1100" y="556.3" font-size="13.33" fill="#333" text-anchor="end">sec</text>
<text x="0" y="0" font-size="13.33" font-weight="bold" fill="#606060" text-anchor="middle" transform="translate(377.2 449.3) rotate(-90)">data/Sound</text>
<rect x="412.5" y="558.6" width="687.0" height="38.89999999999998" fill="#ffffff"/>
<line x1="499.50" y1="558.6" x2="499.50" y2="597.5" stroke="#c4c4c4" stroke-width="1"/>
<line x1="587.50" y1="558.6" x2="587.50" y2="597.5" stroke="#c4c4c4" stroke-width="1"/>
<line x1="674.50" y1="558.6" x2="674.50" y2="597.5" stroke="#c4c4c4" stroke-width="1"/>
<line x1="762.50" y1="558.6" x2="762.50" y2="597.5" stroke="#c4c4c4" stroke-width="1"/>
<line x1="849.50" y1="558.6" x2="849.50" y2="597.5" stroke="#c4c4c4" stroke-width="1"/>
<line x1="937.50" y1="558.6" x2="937.50" y2="597.5" stroke="#c4c4c4" stroke-width="1"/>
<line x1="1024.50" y1="558.6" x2="1024.50" y2="597.5" stroke="#c4c4c4" stroke-width="1"/>
<path d="M499.50 597.5 v-4 M499.50 558.6 v4 M587.50 597.5 v-4 M587.50 558.6 v4 M674.50 597.5 v-4 M674.50 558.6 v4 M762.50 597.5 v-4 M762.50 558.6 v4 M849.50 597.5 v-4 M849.50 558.6 v4 M937.50 597.5 v-4 M937.50 558.6 v4 M1024.50 597.5 v-4 M1024.50 558.6 v4 " stroke="#262626" stroke-width="1" fill="none"/>
<polyline points="414.00,579.49 414.50,579.08 415.00,578.58 415.50,577.26 416.00,576.51 416.50,577.34 417.00,579.48 417.50,578.91 418.00,579.78 418.50,580.00 419.00,579.97 419.50,578.16 420.00,576.40 420.50,577.58 421.00,577.10 421.50,577.57 422.00,580.32 422.50,581.08 423.00,580.44 423.50,579.12 424.00,579.23 424.50,577.70 425.00,576.55 425.50,576.84 426.00,579.45 426.50,582.01 427.00,581.09 427.50,578.87 428.00,579.31 428.50,577.00 429.00,574.67 429.50,574.32 430.00,578.44 430.50,581.15 431.00,580.56 431.50,580.45 432.00,581.17 432.50,579.86 433.00,575.12 433.50,574.93 434.00,576.01 434.50,575.77 435.00,577.12 435.50,580.52 436.00,582.28 436.50,580.50 437.00,579.53 437.50,578.86 438.00,576.81 438.50,574.48 439.00,576.85 439.50,579.61 440.00,581.18 440.50,581.42 441.00,582.25 441.50,579.91 442.00,574.18 442.50,573.56 443.00,575.90 443.50,576.52 444.00,579.63 444.50,584.32 445.00,584.97 445.50,580.60 446.00,578.04 446.50,576.72 447.00,573.58 447.50,571.48 448.00,573.12 448.50,580.26 449.00,585.18 449.50,583.70 450.00,581.58 450.50,581.66 451.00,576.19 451.50,570.33 452.00,571.31 452.50,577.42 453.00,580.12 453.50,583.36 454.00,585.69 454.50,587.79 455.00,580.49 455.50,575.70 456.00,574.16 456.50,575.31 457.00,576.46 457.50,578.77 458.00,585.98 458.50,588.90 459.00,583.20 459.50,579.57 460.00,577.72 460.50,575.14 461.00,572.55 461.50,575.01 462.00,582.28 462.50,584.71 463.00,583.56 463.50,583.63 464.00,582.17 464.50,575.15 465.00,568.86 465.50,569.21 466.00,577.41 466.50,577.80 467.00,580.93 467.50,585.92 468.00,586.26 468.50,581.05 469.00,579.06 469.50,576.72 470.00,573.32 470.50,571.27 471.00,575.30 471.50,582.35 472.00,584.84 472.50,584.18 473.00,585.90 473.50,586.47 474.00,578.15 474.50,573.70 475.00,574.39 475.50,577.00 476.00,583.30 476.50,582.37 477.00,585.69 477.50,586.17 478.00,577.92 478.50,570.21 479.00,570.15 479.50,573.35 480.00,577.72 480.50,579.83 481.00,581.73 481.50,584.04 482.00,581.80 482.50,575.27 483.00,572.94 483.50,574.67 484.00,575.93 484.50,577.26 485.00,583.50 485.50,586.88 486.00,580.78 486.50,576.66 487.00,576.40 487.50,573.54 488.00,571.86 488.50,576.64 489.00,585.32 489.50,585.37 490.00,582.49 490.50,580.24 491.00,576.69 491.50,571.35 492.00,569.80 492.50,576.62 493.00,581.32 493.50,581.43 494.00,583.01 494.50,583.50 495.00,579.62 495.50,574.72 496.00,573.67 496.50,574.87 497.00,574.64 497.50,576.87 498.00,581.65 498.50,583.73 499.00,582.65 499.50,579.09 500.00,577.44 500.50,576.65 501.00,575.47 501.50,574.93 502.00,580.48 502.50,584.61 503.00,582.99 503.50,582.13 504.00,581.40 504.50,577.07 505.00,572.62 505.50,572.81 506.00,576.60 506.50,581.24 507.00,581.60 507.50,581.84 508.00,582.49 508.50,582.01 509.00,577.61 509.50,574.50 510.00,575.74 510.50,577.37 511.00,578.80 511.50,579.37 512.00,582.40 512.50,583.65 513.00,580.89 513.50,575.53 514.00,574.90 514.50,574.41 515.00,574.30 515.50,574.23 516.00,579.07 516.50,583.10 517.00,582.13 517.50,581.40 518.00,580.74 518.50,578.67 519.00,575.00 519.50,574.71 520.00,577.88 520.50,577.83 521.00,579.46 521.50,581.58 522.00,583.17 522.50,580.79 523.00,575.02 523.50,573.93 524.00,574.54 524.50,576.19 525.00,578.31 525.50,580.57 526.00,582.12 526.50,579.81 527.00,579.20 527.50,578.33 528.00,575.87 528.50,573.92 529.00,574.61 529.50,580.05 530.00,581.84 530.50,580.91 531.00,581.72 531.50,582.09 532.00,578.00 532.50,574.82 533.00,575.39 533.50,576.81 534.00,577.68 534.50,578.49 535.00,581.53 535.50,583.22 536.00,580.74 536.50,575.75 537.00,574.32 537.50,575.57 538.00,575.79 538.50,577.61 539.00,581.01 539.50,581.13 540.00,580.37 540.50,580.82 541.00,579.85 541.50,576.59 542.00,574.04 542.50,575.97 543.00,579.60 543.50,581.82 544.00,581.52 544.50,582.30 545.00,581.12 545.50,576.87 546.00,575.34 546.50,576.62 547.00,577.64 547.50,578.92 548.00,579.92 548.50,580.81 549.00,580.92 549.50,578.52 550.00,576.09 550.50,576.73 551.00,576.62 551.50,575.57 552.00,578.59 552.50,580.80 553.00,580.45 553.50,579.31 554.00,579.12 554.50,578.40 555.00,575.75 555.50,575.32 556.00,577.87 556.50,580.53 557.00,580.33 557.50,580.51 558.00,579.86 558.50,578.66 559.00,576.96 559.50,576.88 560.00,576.91 560.50,577.81 561.00,578.18 561.50,580.44 562.00,582.45 562.50,581.92 563.00,578.67 563.50,576.91 564.00,576.52 564.50,575.57 565.00,575.91 565.50,578.50 566.00,579.80 566.50,579.17 567.00,579.90 567.50,580.29 568.00,578.89 568.50,577.21 569.00,577.56 569.50,577.38 570.00,576.41 570.50,577.56 571.00,580.32 571.50,581.09 572.00,580.08 572.50,580.18 573.00,579.37 573.50,577.26 574.00,576.56 574.50,577.08 575.00,578.63 575.50,578.04 576.00,579.69 576.50,581.41 577.00,581.34 577.50,578.55 578.00,577.41 578.50,577.21 579.00,577.87 579.50,577.68 580.00,580.64 580.50,582.21 581.00,580.22 581.50,578.62 582.00,578.32 582.50,576.95 583.00,576.19 583.50,576.17 584.00,578.36 584.50,579.76 585.00,580.05 585.50,579.95 586.00,579.57 586.50,578.71 587.00,576.82 587.50,576.30 588.00,578.50 588.50,579.38 589.00,580.38 589.50,579.94 590.00,579.68 590.50,578.77 591.00,576.70 591.50,577.10 592.00,577.42 592.50,578.49 593.00,579.20 593.50,579.86 594.00,579.94 594.50,578.69 595.00,577.89 595.50,578.36 596.00,578.03 596.50,578.22 597.00,578.50 597.50,579.69 598.00,579.57 598.50,578.91 599.00,578.73 599.50,578.67 600.00,577.76 600.50,577.77 601.00,578.85 601.50,579.44 602.00,579.31 602.50,578.97 603.00,578.70 603.50,578.62 604.00,577.34 604.50,577.10 605.00,577.46 605.50,578.86 606.00,578.41 606.50,579.23 607.00,579.59 607.50,579.94 608.00,579.17 608.50,577.76 609.00,577.77 609.50,577.59 610.00,578.17 610.50,578.99 611.00,579.60 611.50,579.73 612.00,578.67 612.50,578.13 613.00,578.10 613.50,578.20 614.00,578.19 614.50,578.85 615.00,579.34 615.50,579.65 616.00,579.49 616.50,578.58 617.00,579.22 617.50,578.21 618.00,578.33 618.50,578.55 619.00,578.46 619.50,578.44 620.00,579.15 620.50,579.30 621.00,579.18 621.50,578.42 622.00,578.56 622.50,578.82 623.00,577.72 623.50,578.29 624.00,578.09 624.50,578.60 625.00,578.73 625.50,579.31 626.00,579.58 626.50,579.43 627.00,577.57 627.50,578.02 628.00,578.36 628.50,578.38 629.00,578.29 629.50,579.63 630.00,579.70 630.50,579.79 631.00,578.75 631.50,578.49 632.00,577.78 632.50,577.74 633.00,578.64 633.50,579.41 634.00,579.65 634.50,579.34 635.00,578.25 635.50,578.05 636.00,577.51 636.50,577.33 637.00,578.14 637.50,579.44 638.00,579.78 638.50,579.11 639.00,578.56 639.50,577.88 640.00,577.87 640.50,577.57 641.00,577.99 641.50,579.40 642.00,578.94 642.50,579.24 643.00,579.09 643.50,578.65 644.00,578.53 644.50,577.68 645.00,578.72 645.50,578.89 646.00,578.86 646.50,579.81 647.00,579.44 647.50,579.30 648.00,578.08 648.50,577.60 649.00,577.78 649.50,578.15 650.00,578.21 650.50,579.22 651.00,579.51 651.50,578.50 652.00,578.42 652.50,578.55 653.00,577.84 653.50,577.56 654.00,577.98 654.50,578.77 655.00,578.86 655.50,579.64 656.00,579.98 656.50,578.26 657.00,578.39 657.50,577.04 658.00,578.03 658.50,578.01 659.00,578.88 659.50,579.02 660.00,579.33 660.50,579.48 661.00,578.74 661.50,578.37 662.00,578.48 662.50,577.33 663.00,578.01 663.50,578.88 664.00,579.84 664.50,579.30 665.00,578.99 665.50,578.87 666.00,578.79 666.50,577.49 667.00,577.40 667.50,578.17 668.00,578.84 668.50,578.38 669.00,579.47 669.50,580.08 670.00,579.32 670.50,578.34 671.00,575.60 671.50,576.64 672.00,575.99 672.50,575.74 673.00,578.18 673.50,581.31 674.00,580.71 674.50,579.84 675.00,580.69 675.50,579.72 676.00,577.08 676.50,575.03 677.00,575.41 677.50,577.86 678.00,579.22 678.50,581.01 679.00,582.51 679.50,581.56 680.00,577.06 680.50,574.46 681.00,575.56 681.50,576.99 682.00,576.72 682.50,579.41 683.00,583.42 683.50,583.39 684.00,579.60 684.50,576.78 685.00,576.10 685.50,573.97 686.00,574.39 686.50,579.35 687.00,582.11 687.50,581.72 688.00,580.17 688.50,580.17 689.00,577.18 689.50,573.51 690.00,574.28 690.50,578.89 691.00,580.31 691.50,580.82 692.00,582.13 692.50,582.77 693.00,578.81 693.50,574.04 694.00,572.93 694.50,574.50 695.00,576.33 695.50,578.53 696.00,583.41 696.50,584.14 697.00,579.78 697.50,575.80 698.00,574.85 698.50,573.37 699.00,571.66 699.50,576.30 700.00,579.88 700.50,580.90 701.00,581.48 701.50,583.65 702.00,582.49 702.50,576.28 703.00,572.75 703.50,574.18 704.00,575.86 704.50,577.20 705.00,578.98 705.50,582.30 706.00,583.26 706.50,581.14 707.00,579.28 707.50,579.34 708.00,574.54 708.50,571.34 709.00,573.47 709.50,578.05 710.00,579.54 710.50,580.85 711.00,582.92 711.50,583.17 712.00,578.12 712.50,573.15 713.00,573.41 713.50,574.75 714.00,575.31 714.50,578.99 715.00,581.80 715.50,584.56 716.00,582.18 716.50,577.57 717.00,576.57 717.50,575.85 718.00,574.86 718.50,576.44 719.00,581.48 719.50,585.39 720.00,583.54 720.50,581.05 721.00,579.98 721.50,577.58 722.00,573.13 722.50,573.72 723.00,578.10 723.50,580.70 724.00,580.60 724.50,584.53 725.00,585.13 725.50,577.48 726.00,570.91 726.50,571.61 727.00,575.81 727.50,578.79 728.00,580.95 728.50,585.44 729.00,584.80 729.50,579.15 730.00,576.05 730.50,576.06 731.00,574.86 731.50,575.22 732.00,579.50 732.50,583.55 733.00,582.79 733.50,579.06 734.00,578.71 734.50,576.01 735.00,572.02 735.50,573.50 736.00,579.03 736.50,582.22 737.00,582.36 737.50,582.34 738.00,582.60 738.50,578.22 739.00,571.66 739.50,572.51 740.00,578.27 740.50,580.21 741.00,580.78 741.50,581.70 742.00,582.03 742.50,578.69 743.00,575.92 743.50,575.11 744.00,577.10 744.50,577.28 745.00,578.46 745.50,581.73 746.00,583.45 746.50,580.19 747.00,577.32 747.50,575.88 748.00,576.47 748.50,574.90 749.00,575.34 749.50,578.44 750.00,583.54 750.50,582.35 751.00,579.77 751.50,579.06 752.00,577.59 752.50,571.85 753.00,570.69 753.50,576.54 754.00,579.42 754.50,582.02 755.00,584.66 755.50,585.38 756.00,578.69 756.50,575.40 757.00,574.85 757.50,575.25 758.00,574.28 758.50,576.40 759.00,584.09 759.50,587.16 760.00,583.44 760.50,578.14 761.00,578.32 761.50,575.43 762.00,572.75 762.50,574.89 763.00,579.61 763.50,582.12 764.00,581.70 764.50,581.26 765.00,580.16 765.50,575.84 766.00,571.51 766.50,572.99 767.00,575.57 767.50,576.70 768.00,578.56 768.50,582.40 769.00,586.10 769.50,584.49 770.00,576.74 770.50,573.43 771.00,574.16 771.50,573.94 772.00,573.53 772.50,579.36 773.00,583.71 773.50,583.25 774.00,580.94 774.50,579.49 775.00,577.11 775.50,573.38 776.00,574.06 776.50,577.62 777.00,579.49 777.50,579.98 778.00,581.78 778.50,582.10 779.00,579.09 779.50,573.54 780.00,574.75 780.50,574.90 781.00,576.51 781.50,581.70 782.00,586.36 782.50,585.36 783.00,579.83 783.50,578.13 784.00,576.63 784.50,574.05 785.00,572.05 785.50,575.75 786.00,580.63 786.50,581.71 787.00,580.41 787.50,581.83 788.00,581.18 788.50,576.72 789.00,570.67 789.50,572.98 790.00,575.25 790.50,577.08 791.00,580.61 791.50,585.65 792.00,583.53 792.50,577.09 793.00,575.03 793.50,574.49 794.00,572.24 794.50,573.19 795.00,580.70 795.50,584.55 796.00,584.38 796.50,582.10 797.00,582.42 797.50,579.20 798.00,572.56 798.50,571.31 799.00,574.83 799.50,576.56 800.00,577.77 800.50,582.76 801.00,587.66 801.50,584.43 802.00,577.89 802.50,576.52 803.00,575.40 803.50,573.38 804.00,573.62 804.50,581.16 805.00,584.40 805.50,583.41 806.00,583.42 806.50,583.07 807.00,577.85 807.50,572.36 808.00,573.32 808.50,578.88 809.00,581.03 809.50,581.61 810.00,584.48 810.50,582.93 811.00,576.30 811.50,573.13 812.00,575.24 812.50,576.89 813.00,578.56 813.50,581.08 814.00,583.86 814.50,582.12 815.00,577.32 815.50,574.98 816.00,575.75 816.50,574.78 817.00,574.60 817.50,578.58 818.00,584.36 818.50,587.43 819.00,582.30 819.50,575.73 820.00,575.20 820.50,573.71 821.00,572.18 821.50,578.41 822.00,582.94 822.50,583.04 823.00,580.61 823.50,577.83 824.00,577.30 824.50,575.42 825.00,574.05 825.50,576.66 826.00,580.42 826.50,582.04 827.00,581.34 827.50,581.44 828.00,580.75 828.50,576.17 829.00,572.11 829.50,575.07 830.00,578.41 830.50,581.11 831.00,581.84 831.50,582.61 832.00,581.89 832.50,575.65 833.00,572.99 833.50,575.13 834.00,579.38 834.50,580.48 835.00,582.48 835.50,584.42 836.00,581.26 836.50,577.86 837.00,577.70 837.50,576.33 838.00,573.74 838.50,575.32 839.00,580.64 839.50,583.92 840.00,583.51 840.50,582.23 841.00,581.90 841.50,577.11 842.00,574.86 842.50,575.03 843.00,577.10 843.50,578.02 844.00,579.43 844.50,584.78 845.00,586.39 845.50,583.16 846.00,580.16 846.50,580.09 847.00,577.22 847.50,573.00 848.00,574.40 848.50,578.82 849.00,580.74 849.50,580.59 850.00,581.96 850.50,583.04 851.00,579.89 851.50,573.09 852.00,572.15 852.50,574.36 853.00,575.95 853.50,579.34 854.00,583.57 854.50,585.98 855.00,582.09 855.50,577.71 856.00,577.46 856.50,575.26 857.00,572.61 857.50,573.33 858.00,577.46 858.50,580.26 859.00,581.28 859.50,582.95 860.00,583.90 860.50,579.68 861.00,574.39 861.50,572.41 862.00,574.67 862.50,574.85 863.00,576.44 863.50,581.51 864.00,585.49 864.50,582.52 865.00,578.73 865.50,575.13 866.00,575.04 866.50,571.94 867.00,572.00 867.50,579.69 868.00,580.98 868.50,581.12 869.00,580.70 869.50,581.44 870.00,579.65 870.50,574.87 871.00,574.68 871.50,576.09 872.00,575.06 872.50,578.32 873.00,581.50 873.50,582.23 874.00,581.41 874.50,579.88 875.00,577.91 875.50,575.63 876.00,572.91 876.50,575.76 877.00,581.68 877.50,583.65 878.00,580.91 878.50,578.51 879.00,577.69 879.50,573.08 880.00,571.30 880.50,576.03 881.00,579.26 881.50,580.97 882.00,583.34 882.50,585.14 883.00,581.13 883.50,576.65 884.00,575.22 884.50,574.85 885.00,573.47 885.50,574.26 886.00,581.81 886.50,585.16 887.00,583.06 887.50,580.02 888.00,579.93 888.50,575.18 889.00,571.07 889.50,574.31 890.00,580.74 890.50,581.72 891.00,582.16 891.50,584.35 892.00,582.62 892.50,577.22 893.00,575.07 893.50,575.31 894.00,577.32 894.50,578.59 895.00,580.22 895.50,582.67 896.00,581.89 896.50,577.28 897.00,575.28 897.50,576.32 898.00,575.82 898.50,576.63 899.00,580.40 899.50,584.43 900.00,583.04 900.50,581.16 901.00,579.56 901.50,577.04 902.00,571.81 902.50,571.03 903.00,575.51 903.50,579.90 904.00,581.00 904.50,581.17 905.00,583.50 905.50,581.68 906.00,578.22 906.50,574.13 907.00,575.00 907.50,577.10 908.00,577.33 908.50,580.51 909.00,584.27 909.50,582.93 910.00,578.66 910.50,577.10 911.00,577.05 911.50,574.96 912.00,575.00 912.50,578.66 913.00,581.06 913.50,581.67 914.00,580.43 914.50,579.92 915.00,579.03 915.50,574.87 916.00,573.63 916.50,576.91 917.00,577.44 917.50,578.29 918.00,583.46 918.50,586.60 919.00,582.99 919.50,577.96 920.00,577.29 920.50,576.66 921.00,574.25 921.50,575.88 922.00,579.45 922.50,584.38 923.00,583.28 923.50,582.52 924.00,582.06 924.50,579.76 925.00,575.58 925.50,573.52 926.00,575.90 926.50,578.43 927.00,579.07 927.50,580.40 928.00,583.08 928.50,581.47 929.00,579.13 929.50,578.14 930.00,576.74 930.50,574.90 931.00,575.28 931.50,579.16 932.00,582.29 932.50,581.44 933.00,581.04 933.50,580.84 934.00,576.78 934.50,572.23 935.00,574.04 935.50,578.59 936.00,579.90 936.50,581.08 937.00,585.18 937.50,584.10 938.00,576.79 938.50,573.62 939.00,575.01 939.50,575.10 940.00,575.29 940.50,582.32 941.00,584.55 941.50,582.79 942.00,578.23 942.50,577.93 943.00,577.22 943.50,574.30 944.00,574.19 944.50,580.55 945.00,582.97 945.50,583.08 946.00,582.31 946.50,582.57 947.00,580.28 947.50,574.11 948.00,573.16 948.50,575.65 949.00,576.75 949.50,577.27 950.00,582.98 950.50,586.74 951.00,583.77 951.50,579.45 952.00,576.86 952.50,576.13 953.00,571.53 953.50,573.42 954.00,580.30 954.50,582.54 955.00,581.28 955.50,581.89 956.00,581.00 956.50,577.02 957.00,574.53 957.50,576.19 958.00,579.07 958.50,578.86 959.00,580.40 959.50,584.08 960.00,582.36 960.50,578.27 961.00,576.24 961.50,575.98 962.00,574.56 962.50,574.59 963.00,578.72 963.50,581.53 964.00,581.68 964.50,580.44 965.00,581.63 965.50,579.86 966.00,574.53 966.50,571.88 967.00,574.36 967.50,574.59 968.00,574.42 968.50,578.12 969.00,582.82 969.50,582.49 970.00,580.89 970.50,579.35 971.00,577.59 971.50,574.96 972.00,573.32 972.50,577.26 973.00,580.84 973.50,583.04 974.00,582.59 974.50,580.77 975.00,578.59 975.50,573.21 976.00,571.59 976.50,575.34 977.00,580.58 977.50,581.81 978.00,582.61 978.50,584.43 979.00,582.64 979.50,575.38 980.00,571.96 980.50,575.53 981.00,577.85 981.50,578.39 982.00,582.40 982.50,584.98 983.00,584.37 983.50,576.97 984.00,574.96 984.50,574.52 985.00,574.75 985.50,574.83 986.00,579.26 986.50,583.89 987.00,582.71 987.50,577.99 988.00,577.01 988.50,575.89 989.00,574.99 989.50,575.28 990.00,580.12 990.50,582.61 991.00,581.63 991.50,580.60 992.00,580.36 992.50,577.40 993.00,573.37 993.50,573.45 994.00,575.72 994.50,578.61 995.00,578.95 995.50,582.95 996.00,584.26 996.50,579.43 997.00,576.97 997.50,577.15 998.00,575.10 998.50,572.06 999.00,572.00 999.50,576.52 1000.00,580.31 1000.50,580.27 1001.00,580.84 1001.50,582.38 1002.00,580.64 1002.50,577.98 1003.00,574.54 1003.50,575.54 1004.00,574.38 1004.50,576.10 1005.00,580.78 1005.50,584.69 1006.00,582.97 1006.50,581.09 1007.00,579.86 1007.50,577.92 1008.00,573.81 1008.50,572.47 1009.00,576.04 1009.50,579.93 1010.00,580.98 1010.50,580.67 1011.00,581.11 1011.50,580.59 1012.00,576.96 1012.50,572.58 1013.00,575.78 1013.50,579.86 1014.00,580.85 1014.50,581.10 1015.00,583.00 1015.50,580.23 1016.00,576.24 1016.50,574.13 1017.00,575.35 1017.50,574.49 1018.00,575.21 1018.50,579.56 1019.00,583.10 1019.50,582.11 1020.00,581.15 1020.50,580.66 1021.00,579.94 1021.50,575.80 1022.00,573.66 1022.50,575.92 1023.00,578.23 1023.50,580.34 1024.00,581.83 1024.50,582.37 1025.00,579.99 1025.50,576.38 1026.00,575.52 1026.50,576.37 1027.00,577.46 1027.50,578.16 1028.00,580.84 1028.50,582.62 1029.00,580.95 1029.50,579.46 1030.00,578.91 1030.50,575.90 1031.00,571.98 1031.50,572.57 1032.00,578.09 1032.50,583.15 1033.00,582.41 1033.50,582.11 1034.00,581.46 1034.50,576.45 1035.00,572.41 1035.50,572.59 1036.00,577.81 1036.50,579.29 1037.00,579.40 1037.50,581.92 1038.00,583.81 1038.50,580.80 1039.00,576.64 1039.50,576.21 1040.00,575.20 1040.50,574.13 1041.00,575.28 1041.50,581.83 1042.00,583.01 1042.50,581.72 1043.00,579.26 1043.50,578.39 1044.00,577.23 1044.50,574.13 1045.00,576.27 1045.50,578.82 1046.00,580.53 1046.50,580.35 1047.00,579.53 1047.50,579.35 1048.00,576.50 1048.50,574.77 1049.00,576.01 1049.50,578.27 1050.00,579.14 1050.50,580.52 1051.00,582.55 1051.50,582.15 1052.00,577.64 1052.50,578.08 1053.00,577.38 1053.50,577.00 1054.00,577.58 1054.50,578.39 1055.00,581.51 1055.50,580.57 1056.00,579.36 1056.50,578.30 1057.00,578.00 1057.50,576.91 1058.00,576.85 1058.50,578.18 1059.00,579.24 1059.50,579.87 1060.00,580.03 1060.50,580.32 1061.00,579.38 1061.50,577.33 1062.00,575.34 1062.50,577.34 1063.00,579.16 1063.50,579.14 1064.00,579.61 1064.50,580.01 1065.00,579.95 1065.50,577.17 1066.00,576.40 1066.50,577.16 1067.00,577.93 1067.50,578.20 1068.00,579.21 1068.50,580.30 1069.00,579.22 1069.50,578.61 1070.00,578.22 1070.50,577.05 1071.00,576.43 1071.50,577.57 1072.00,579.63 1072.50,579.68 1073.00,579.74 1073.50,579.24 1074.00,579.17 1074.50,577.48 1075.00,576.38 1075.50,577.17 1076.00,578.80 1076.50,578.76 1077.00,579.43 1077.50,579.87 1078.00,579.47 1078.50,577.30 1079.00,577.39 1079.50,577.71 1080.00,577.38 1080.50,579.06 1081.00,579.37 1081.50,579.94 1082.00,578.30 1082.50,577.46 1083.00,577.88 1083.50,577.06 1084.00,577.40 1084.50,578.73 1085.00,580.48 1085.50,580.15 1086.00,579.07 1086.50,578.55 1087.00,578.68 1087.50,577.51 1088.00,577.42 1088.50,578.32 1089.00,579.29 1089.50,578.90 1090.00,579.31 1090.50,579.22 1091.00,579.34 1091.50,577.98 1092.00,577.92 1092.50,578.15 1093.00,577.72 1093.50,577.98 1094.00,578.83 1094.50,579.75 1095.00,579.26 1095.50,578.94 1096.00,578.75 1096.50,577.79 1097.00,577.46 1097.50,577.43 1098.00,578.15" fill="none" stroke="#0a74be" stroke-width="1.05" stroke-linejoin="round"/>
<rect x="412.5" y="559" width="687.5" height="39" fill="none" stroke="#1e1e1e" stroke-width="2"/>
<rect x="409" y="575" width="7" height="7" fill="#a05a5a" stroke="#1a1a1a" stroke-width="1.5"/>
<rect x="1096" y="575" width="7" height="7" fill="#a05a5a" stroke="#1a1a1a" stroke-width="1.5"/>
<text x="412.5" y="614" font-size="13.33" fill="#4a4a4a" text-anchor="middle" textLength="6.81" lengthAdjust="spacingAndGlyphs">0</text>
<text x="499.5" y="614" font-size="13.33" fill="#4a4a4a" text-anchor="middle" textLength="17.03" lengthAdjust="spacingAndGlyphs">0.2</text>
<text x="587.5" y="614" font-size="13.33" fill="#4a4a4a" text-anchor="middle" textLength="17.03" lengthAdjust="spacingAndGlyphs">0.4</text>
<text x="674.5" y="614" font-size="13.33" fill="#4a4a4a" text-anchor="middle" textLength="17.03" lengthAdjust="spacingAndGlyphs">0.6</text>
<text x="762.5" y="614" font-size="13.33" fill="#4a4a4a" text-anchor="middle" textLength="17.03" lengthAdjust="spacingAndGlyphs">0.8</text>
<text x="849.5" y="614" font-size="13.33" fill="#4a4a4a" text-anchor="middle" textLength="6.81" lengthAdjust="spacingAndGlyphs">1</text>
<text x="937.5" y="614" font-size="13.33" fill="#4a4a4a" text-anchor="middle" textLength="17.03" lengthAdjust="spacingAndGlyphs">1.2</text>
<text x="1024.5" y="614" font-size="13.33" fill="#4a4a4a" text-anchor="middle" textLength="17.03" lengthAdjust="spacingAndGlyphs">1.4</text>
<text x="1100" y="629" font-size="13.33" fill="#333" text-anchor="end">sec</text>
<text x="421.5" y="642.6" font-size="12" fill="#222" textLength="29.5" lengthAdjust="spacingAndGlyphs">Scale</text>
<circle cx="486" cy="638.8" r="6.5" fill="#ffffff" stroke="#444" stroke-width="1"/>
<text x="496.7" y="641.6" font-size="12" fill="#222">ms</text>
<circle cx="532" cy="638.8" r="6.5" fill="#ffffff" stroke="#444" stroke-width="1"/>
<circle cx="532" cy="638.8" r="3.2" fill="#222"/>
<text x="542.4" y="641.6" font-size="12" fill="#222">s</text>
</svg>
</body></html>
